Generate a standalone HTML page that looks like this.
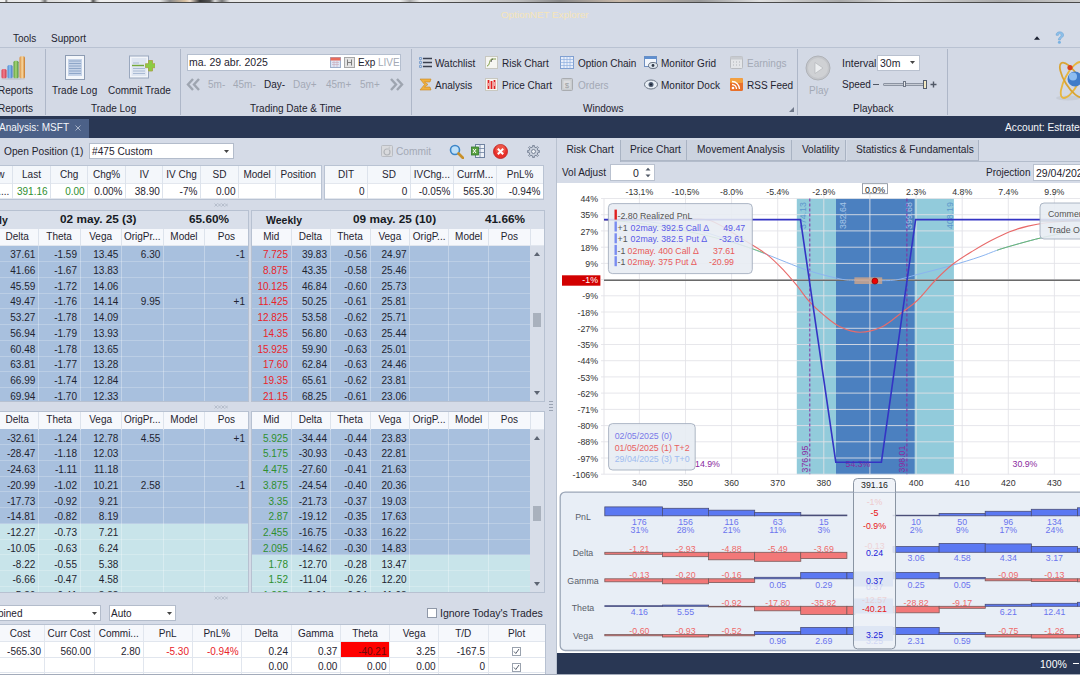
<!DOCTYPE html>
<html><head><meta charset="utf-8">
<style>
*{box-sizing:border-box;margin:0;padding:0}
html,body{width:1080px;height:675px;overflow:hidden;background:#d5dbe7;font-family:"Liberation Sans",sans-serif;font-size:10px;color:#1f2430}
.a{position:absolute}
.t{position:absolute;white-space:nowrap;line-height:1}
#topstrip{left:0;top:0;width:1080px;height:2px}
#topline{left:0;top:2px;width:1080px;height:1px;background:#4a4a4a}
.sep{position:absolute;width:1px;background:#aeb7c8}
.dis{color:#a3a9b5}
.grid{position:absolute;border-collapse:collapse;table-layout:fixed}
.c{position:absolute;white-space:nowrap;overflow:hidden}
</style></head><body>
<div id="topstrip" class="a" style="background:linear-gradient(90deg,#f0f0f0 0,#f0f0f0 5px,#6a6a6a 6px,#e8e8e8 8px,#eee 40px,#777 45px,#ddd 48px,#f2f2f2 90px,#555 93px,#ccc 97px,#f0f0f0 100px,#e6e6e6 160px,#8a8a8a 170px,#d8c0a0 185px,#f0e0d0 190px,#333 200px,#555 210px,#ddd 215px,#777 222px,#e8e8e8 230px,#eee 400px,#aaa 410px,#ececec 420px,#bbb 520px,#888 560px,#c9b9a9 620px,#999 700px,#e0e0e0 760px,#aaa 840px,#ddd 900px,#aaa 1000px,#ccc 1080px)"></div>
<div id="topline" class="a"></div>
<div class="t" style="left:501px;top:10px;color:#f6e5b8;font-size:9.8px">OptionNET Explorer</div>
<!-- menu -->
<div class="t" style="left:13px;top:34px">Tools</div>
<div class="t" style="left:51px;top:34px">Support</div>
<svg class="a" style="left:1034px;top:35.5px" width="6" height="4"><path d="M0 3.8L3 0.3L6 3.8Z" fill="#1a2030"/></svg>
<svg class="a" style="left:1054px;top:31px" width="11" height="14"><path d="M2 4.2C2 1.8 4 0.8 5.8 0.8C8 0.8 9.6 2.2 9.6 4C9.6 5.8 8.2 6.4 7.2 7.2C6.6 7.7 6.4 8.2 6.4 9H4.4C4.4 7.6 4.8 6.8 5.8 6C6.6 5.4 7.2 5 7.2 4.1C7.2 3.3 6.6 2.8 5.8 2.8C4.9 2.8 4.3 3.4 4.3 4.4Z" fill="#8cc0ea" stroke="#6a9fd0" stroke-width="0.5"/><circle cx="5.4" cy="11.3" r="1.5" fill="#7ab2e2"/></svg>
<!-- ribbon -->
<div class="a" style="left:0;top:47px;width:1080px;height:1px;background:#b9c2d2"></div>
<div class="a" style="left:0;top:48px;width:1080px;height:68px;background:#d3d9e5"></div>
<div class="sep" style="left:45px;top:49px;height:66px"></div>
<div class="sep" style="left:180px;top:49px;height:66px"></div>
<div class="sep" style="left:411px;top:49px;height:66px"></div>
<div class="sep" style="left:797px;top:49px;height:66px"></div>
<div class="sep" style="left:947px;top:49px;height:66px"></div>
<!-- reports group -->
<svg class="a" style="left:0;top:55px" width="27" height="25">
 <defs><linearGradient id="gr1" x1="0" x2="1"><stop offset="0" stop-color="#d84050"/><stop offset="0.5" stop-color="#f08090"/><stop offset="1" stop-color="#c83040"/></linearGradient>
 <linearGradient id="gr2" x1="0" x2="1"><stop offset="0" stop-color="#4a88d0"/><stop offset="0.5" stop-color="#90c0f0"/><stop offset="1" stop-color="#3a70b8"/></linearGradient>
 <linearGradient id="gr3" x1="0" x2="1"><stop offset="0" stop-color="#5a9a38"/><stop offset="0.5" stop-color="#a8d878"/><stop offset="1" stop-color="#4a8a30"/></linearGradient>
 <linearGradient id="gr4" x1="0" x2="1"><stop offset="0" stop-color="#d88a38"/><stop offset="0.5" stop-color="#f8d8a0"/><stop offset="1" stop-color="#c87828"/></linearGradient></defs>
 <rect x="1.5" y="14" width="5" height="9.5" rx="1.5" fill="url(#gr1)"/>
 <rect x="7.5" y="10" width="5" height="13.5" rx="1.5" fill="url(#gr2)"/>
 <rect x="13.5" y="5.8" width="5" height="17.7" rx="1.5" fill="url(#gr3)"/>
 <rect x="19.5" y="1.3" width="5.5" height="22.2" rx="1.5" fill="url(#gr4)"/>
 <ellipse cx="13" cy="24" rx="12" ry="1.2" fill="#b9c0cc" opacity="0.6"/>
</svg>
<div class="t" style="left:-2px;top:86px">Reports</div>
<div class="t" style="left:-2px;top:104px">Reports</div>
<!-- trade log group -->
<svg class="a" style="left:64px;top:55px" width="22" height="26">
 <rect x="1.5" y="0.5" width="19" height="24" fill="#f4f7fb" stroke="#8d9cb3"/>
 <rect x="4" y="4" width="14" height="17" fill="#c5d3e8"/>
 <path d="M5 6h12M5 8.5h12M5 11h12M5 13.5h12M5 16h12M5 18.5h12" stroke="#8ea6c8" stroke-width="1"/>
</svg>
<div class="t" style="left:52px;top:86px">Trade Log</div>
<svg class="a" style="left:128px;top:55px" width="27" height="25">
 <rect x="1.5" y="1" width="19" height="22" fill="#f2f5fa" stroke="#9aa8be"/>
 <rect x="3.5" y="3" width="15" height="18" fill="#dfe6f1"/>
 <path d="M5 13.5h12M5 16h12M5 18.5h12M5 8h6" stroke="#a9bad4" stroke-width="1.2"/>
 <path d="M4 10.5h12" stroke="#74a83a" stroke-width="1.4"/>
 <path d="M20.5 5.5h4v3.2h2.8v4h-2.8v3.3h-4v-3.3h-3v-4h3z" fill="#8ccc44" stroke="#a8a040" stroke-width="0.8"/>
</svg>
<div class="t" style="left:108px;top:86px">Commit Trade</div>
<div class="t" style="left:91px;top:104px">Trade Log</div>
<!-- trading date group -->
<div class="a" style="left:187px;top:54px;width:214px;height:17px;background:#fff;border:1px solid #b5bfcf"></div>
<div class="t" style="left:189px;top:57px;font-size:10.5px">ma. 29 abr. 2025</div>
<svg class="a" style="left:330px;top:57px" width="11" height="11">
 <rect x="0.5" y="0.5" width="10" height="10" fill="#dde6f5" stroke="#9fb0cc"/>
 <rect x="0.5" y="0.5" width="10" height="3" fill="#e86a5a"/>
 <path d="M2 5.5h7M2 7.5h7M4 4v6M7 4v6" stroke="#c9a9b9" stroke-width="0.6"/>
</svg>
<svg class="a" style="left:344px;top:57px" width="11" height="11">
 <rect x="0.5" y="0.5" width="10" height="10" fill="#e4e4e4" stroke="#a7a7a7"/>
 <path d="M3.5 2.5v6M7.5 2.5v6M3.5 5.5h4" stroke="#7d7d7d" stroke-width="1"/>
</svg>
<div class="t" style="left:358px;top:58px">Exp</div>
<div class="t dis" style="left:378px;top:58px">LIVE</div>
<svg class="a" style="left:186px;top:78px" width="15" height="13"><path d="M7 1L2 6.5L7 12M13 1L8 6.5L13 12" fill="none" stroke="#9ea5b0" stroke-width="2.4"/></svg>
<div class="t dis" style="left:208px;top:80px">5m-</div>
<div class="t dis" style="left:233px;top:80px">45m-</div>
<div class="t" style="left:264px;top:80px">Day-</div>
<div class="t dis" style="left:293px;top:80px">Day+</div>
<div class="t dis" style="left:326px;top:80px">45m+</div>
<div class="t dis" style="left:360px;top:80px">5m+</div>
<svg class="a" style="left:389px;top:78px" width="15" height="13"><path d="M2 1L7 6.5L2 12M8 1L13 6.5L8 12" fill="none" stroke="#9ea5b0" stroke-width="2.4"/></svg>
<div class="t" style="left:250px;top:104px">Trading Date &amp; Time</div>
<!-- windows group -->
<svg class="a" style="left:419px;top:57px" width="13" height="11">
 <circle cx="1.5" cy="1.5" r="1.2" fill="none" stroke="#4a7fc0" stroke-width="0.8"/><circle cx="1.5" cy="5.5" r="1.2" fill="none" stroke="#4a7fc0" stroke-width="0.8"/><circle cx="1.5" cy="9.5" r="1.2" fill="none" stroke="#4a7fc0" stroke-width="0.8"/>
 <path d="M4 1.5h9M4 5.5h9M4 9.5h9" stroke="#3b4150" stroke-width="1.3"/>
</svg>
<div class="t" style="left:435px;top:59px">Watchlist</div>
<svg class="a" style="left:419px;top:78px" width="13" height="13"><path d="M1 1h11l-1 3H5.5L9 6.5 5.5 9H11l1 3H1l4.5-5.5z" fill="#f0b040" stroke="#c98820" stroke-width="0.6"/></svg>
<div class="t" style="left:435px;top:81px">Analysis</div>
<svg class="a" style="left:485px;top:56px" width="13" height="13"><rect x="0.5" y="0.5" width="12" height="12" fill="#f6f6f2" stroke="#c8c8c0"/><path d="M2 10C5 10 4 3 7 3S9 3 11 3" fill="none" stroke="#7a9a40" stroke-width="1"/><path d="M6 6C6.5 4 7 3 8 3" stroke="#303030" stroke-width="0.8" fill="none"/></svg>
<div class="t" style="left:502px;top:59px">Risk Chart</div>
<svg class="a" style="left:485px;top:78px" width="13" height="13"><rect x="0.5" y="0.5" width="12" height="12" fill="#f6f6f2" stroke="#c8c8c0"/><path d="M3.5 2v9M6.5 3v8M9.5 2v9" stroke="#e02020" stroke-width="1.8"/><path d="M3.5 5v3M9.5 4v4" stroke="#fff" stroke-width="0.6"/></svg>
<div class="t" style="left:502px;top:81px">Price Chart</div>
<svg class="a" style="left:560px;top:56px" width="14" height="13"><rect x="0.5" y="0.5" width="13" height="12" fill="#e8eefa" stroke="#7f9fd0"/><path d="M0.5 3.5h13M0.5 6.5h13M0.5 9.5h13M4 0.5v12M7 0.5v12M10 0.5v12" stroke="#8fb0e0" stroke-width="0.7"/></svg>
<div class="t" style="left:578px;top:59px">Option Chain</div>
<svg class="a" style="left:561px;top:78px" width="12" height="13"><rect x="0.5" y="0.5" width="11" height="12" rx="1" fill="#c9ccd0" stroke="#a9acb0"/><rect x="2.5" y="2.5" width="7" height="8" fill="#dcdde0"/><text x="6" y="10" text-anchor="middle" font-size="8" fill="#9a9da0" font-family="Liberation Sans">$</text></svg>
<div class="t dis" style="left:578px;top:81px">Orders</div>
<svg class="a" style="left:644px;top:56px" width="14" height="13"><rect x="0.5" y="0.5" width="12" height="10" fill="#f2f6fc" stroke="#6f8fbf"/><rect x="0.5" y="0.5" width="12" height="2.5" fill="#5f8fd0"/><ellipse cx="9" cy="9.5" rx="4.5" ry="3" fill="#e0e8f0" stroke="#4a5566" stroke-width="0.8"/><circle cx="9" cy="9.5" r="1.4" fill="#303a48"/></svg>
<div class="t" style="left:661px;top:59px">Monitor Grid</div>
<svg class="a" style="left:644px;top:79px" width="14" height="11"><ellipse cx="7" cy="5.5" rx="6.5" ry="4.5" fill="#e8eef5" stroke="#5a6676" stroke-width="0.9"/><circle cx="7" cy="5.5" r="2.5" fill="#4b5a70"/><circle cx="7" cy="5.5" r="1" fill="#1a2230"/></svg>
<div class="t" style="left:661px;top:81px">Monitor Dock</div>
<svg class="a" style="left:730px;top:56px" width="13" height="13"><rect x="0.5" y="0.5" width="12" height="12" rx="1" fill="#e3e5e8" stroke="#b8bbc0"/><rect x="0.5" y="0.5" width="12" height="3" fill="#c8cbd0"/><path d="M3 6h1M6 6h1M9 6h1M3 9h1M6 9h1M9 9h1" stroke="#b0b3b8"/></svg>
<div class="t dis" style="left:747px;top:59px">Earnings</div>
<svg class="a" style="left:730px;top:78px" width="13" height="13"><rect x="0" y="0" width="13" height="13" rx="1.5" fill="#e8702a"/><rect x="0" y="0" width="13" height="5" rx="1.5" fill="#f3a040"/><circle cx="3" cy="10" r="1.3" fill="#fff"/><path d="M2 6.5a4.5 4.5 0 0 1 4.5 4.5M2 3.5a7.5 7.5 0 0 1 7.5 7.5" fill="none" stroke="#fff" stroke-width="1.3"/></svg>
<div class="t" style="left:747px;top:81px">RSS Feed</div>
<div class="t" style="left:583px;top:104px">Windows</div>
<svg class="a" style="left:789px;top:107px" width="5" height="5"><path d="M5 0V5H0Z" fill="#6f7889"/></svg>
<!-- playback group -->
<svg class="a" style="left:805px;top:55px" width="26" height="26"><circle cx="13" cy="13" r="12" fill="#c4c6ca" stroke="#b0b3b8"/><circle cx="13" cy="13" r="10" fill="#cfd1d4"/><path d="M10 7.5L18 13L10 18.5Z" fill="#eceef0" stroke="#aeb1b5" stroke-width="0.6"/></svg>
<div class="t dis" style="left:809px;top:86px">Play</div>
<div class="t" style="left:842px;top:58px;font-size:10.5px">Interval</div>
<div class="a" style="left:877px;top:55px;width:43px;height:16px;background:#fff;border:1px solid #b9c1cf"></div>
<div class="t" style="left:880px;top:58px;font-size:10.5px">30m</div>
<svg class="a" style="left:910px;top:61px" width="5" height="3"><path d="M0 0H5L2.5 3Z" fill="#444"/></svg>
<div class="t" style="left:842px;top:80px;font-size:10px">Speed</div>
<div class="a" style="left:873px;top:84px;width:6px;height:1px;background:#505866"></div>
<div class="a" style="left:883px;top:83px;width:41px;height:3px;background:#c5cad3;border:1px solid #8c94a2;border-radius:1px"></div>
<div class="a" style="left:903px;top:81px;width:3px;height:6px;background:#e6e8ec;border:1px solid #6f7785"></div>
<div class="a" style="left:923px;top:80px;width:4px;height:9px;background:#f2e8c0;border:1px solid #555d6b"></div>
<svg class="a" style="left:930px;top:81px" width="7" height="7"><path d="M3.5 0.5v6M0.5 3.5h6" stroke="#505866" stroke-width="1.4"/></svg>
<div class="t" style="left:853px;top:104px">Playback</div>
<!-- atom logo -->
<svg class="a" style="left:1050px;top:56px" width="30" height="48">
 <ellipse cx="18" cy="42" rx="12" ry="2.5" fill="#c4c9d3" opacity="0.8"/>
 <ellipse cx="22" cy="24" rx="7" ry="20" transform="rotate(28 22 24)" fill="none" stroke="#e6b640" stroke-width="1.8"/>
 <ellipse cx="22" cy="24" rx="7" ry="20" transform="rotate(-32 22 24)" fill="none" stroke="#d9a534" stroke-width="1.8"/>
 <circle cx="25" cy="23" r="7.5" fill="#3f7cc9"/>
 <circle cx="23" cy="20.5" r="4" fill="#8dbdf0"/>
 <circle cx="20" cy="11.5" r="2.6" fill="#d8401c"/>
</svg>
<!-- dark strip -->
<div class="a" style="left:0;top:116px;width:1080px;height:22px;background:#293754"></div>
<div class="a" style="left:0;top:119px;width:89px;height:19px;background:#4c6188"></div>
<div class="t" style="left:-1px;top:123px;color:#f4f6fa;font-size:10px">Analysis: MSFT</div>
<svg class="a" style="left:75px;top:125px" width="6" height="6"><path d="M0.5 0.5L5.5 5.5M5.5 0.5L0.5 5.5" stroke="#a9b4c8" stroke-width="1"/></svg>
<div class="t" style="left:1005px;top:123px;color:#f4f6fa;font-size:10.2px">Account: Estrategia</div>
<div class="a" style="left:0;top:138px;width:556px;height:537px;background:#d5dbe7"></div>
<div class="a" style="left:556px;top:138px;width:1px;height:537px;background:#b9c2d0"></div>
<div class="t" style="left:4px;top:147px;font-size:10.2px">Open Position (1)</div>
<div class="a" style="left:89px;top:143px;width:145px;height:16px;background:#fff;border:1px solid #b3bccb"></div>
<div class="t" style="left:92px;top:147px;font-size:10.2px">#475 Custom</div>
<svg class="a" style="left:224px;top:150px" width="5" height="3"><path d="M0 0H5L2.5 3Z" fill="#444"/></svg>
<svg class="a" style="left:381px;top:145px" width="12" height="12"><rect x="0.5" y="0.5" width="11" height="11" rx="1" fill="#d9dadd" stroke="#b9bcc2"/><circle cx="6" cy="7" r="3" fill="none" stroke="#b0b3b8" stroke-width="1.2"/><path d="M9 1v4h-4" fill="#c7c9cd"/></svg>
<div class="t dis" style="left:396px;top:147px;font-size:10.2px">Commit</div>
<svg class="a" style="left:449px;top:144px" width="15" height="15"><circle cx="6" cy="6" r="4.5" fill="#bfe0f8" stroke="#3d86c8" stroke-width="1.6"/><path d="M9.5 9.5L14 14" stroke="#c8902a" stroke-width="2.6" stroke-linecap="round"/></svg>
<svg class="a" style="left:471px;top:144px" width="14" height="14"><rect x="4.5" y="0.5" width="9" height="13" fill="#eef2f8" stroke="#6f82a0"/><path d="M4.5 4.5h9M4.5 8.5h9M9 0.5v13" stroke="#6f82a0" stroke-width="0.8"/><rect x="0.5" y="3" width="7" height="8" fill="#5aa040" stroke="#2f7a2a" stroke-width="0.8"/><path d="M2 5l3 4M5 5l-3 4" stroke="#fff" stroke-width="1"/></svg>
<svg class="a" style="left:493px;top:144px" width="15" height="15"><circle cx="7.5" cy="7.5" r="7" fill="#e8302a" stroke="#b82020" stroke-width="0.8"/><circle cx="7.5" cy="5.5" r="5" fill="#f06a5a" opacity="0.6"/><path d="M4.8 4.8l5.4 5.4M10.2 4.8l-5.4 5.4" stroke="#fff" stroke-width="2"/></svg>
<svg class="a" style="left:527px;top:145px" width="13" height="13"><path d="M11.03 5.69 L12.76 5.76 L12.76 7.24 L11.03 7.31 L10.27 9.13 L11.45 10.40 L10.40 11.45 L9.13 10.27 L7.31 11.03 L7.24 12.76 L5.76 12.76 L5.69 11.03 L3.87 10.27 L2.60 11.45 L1.55 10.40 L2.73 9.13 L1.97 7.31 L0.24 7.24 L0.24 5.76 L1.97 5.69 L2.73 3.87 L1.55 2.60 L2.60 1.55 L3.87 2.73 L5.69 1.97 L5.76 0.24 L7.24 0.24 L7.31 1.97 L9.13 2.73 L10.40 1.55 L11.45 2.60 L10.27 3.87Z" fill="#c9d0dc" stroke="#6f7b8e" stroke-width="0.9"/><circle cx="6.5" cy="6.5" r="2" fill="#eef1f5" stroke="#6f7b8e" stroke-width="0.9"/></svg>
<div class="a" style="left:-25.0px;top:166.0px;width:346.0px;height:32.5px;background:#fff;overflow:hidden">
<div class="a" style="left:0;top:0;width:346.0px;height:17.7px;background:#f4f7fb"></div>
<div class="c" style="left:0.0px;top:0.0px;width:37.4px;height:17.7px;line-height:17.7px;text-align:center;font-size:10px;">View</div>
<div class="c" style="left:37.4px;top:0.0px;width:38.2px;height:17.7px;line-height:17.7px;text-align:center;font-size:10px;">Last</div>
<div class="c" style="left:75.6px;top:0.0px;width:37.0px;height:17.7px;line-height:17.7px;text-align:center;font-size:10px;">Chg</div>
<div class="c" style="left:112.6px;top:0.0px;width:37.9px;height:17.7px;line-height:17.7px;text-align:center;font-size:10px;">Chg%</div>
<div class="c" style="left:150.5px;top:0.0px;width:37.3px;height:17.7px;line-height:17.7px;text-align:center;font-size:10px;">IV</div>
<div class="c" style="left:187.8px;top:0.0px;width:37.6px;height:17.7px;line-height:17.7px;text-align:center;font-size:10px;">IV Chg</div>
<div class="c" style="left:225.4px;top:0.0px;width:38.1px;height:17.7px;line-height:17.7px;text-align:center;font-size:10px;">SD</div>
<div class="c" style="left:263.5px;top:0.0px;width:37.1px;height:17.7px;line-height:17.7px;text-align:center;font-size:10px;">Model</div>
<div class="c" style="left:300.6px;top:0.0px;width:45.4px;height:17.7px;line-height:17.7px;text-align:center;font-size:10px;">Position</div>
<div class="a" style="left:0;top:16.7px;width:346.0px;height:1px;background:#e3e7ee"></div>
<div class="c" style="left:0.0px;top:19.2px;width:37.4px;height:14.8px;line-height:14.8px;text-align:right;padding-right:3px;font-size:10px;">....</div>
<div class="c" style="left:37.4px;top:19.2px;width:38.2px;height:14.8px;line-height:14.8px;text-align:right;padding-right:3px;color:#2f8f2f;font-size:10px;">391.16</div>
<div class="c" style="left:75.6px;top:19.2px;width:37.0px;height:14.8px;line-height:14.8px;text-align:right;padding-right:3px;color:#2f8f2f;font-size:10px;">0.00</div>
<div class="c" style="left:112.6px;top:19.2px;width:37.9px;height:14.8px;line-height:14.8px;text-align:right;padding-right:3px;font-size:10px;">0.00%</div>
<div class="c" style="left:150.5px;top:19.2px;width:37.3px;height:14.8px;line-height:14.8px;text-align:right;padding-right:3px;font-size:10px;">38.90</div>
<div class="c" style="left:187.8px;top:19.2px;width:37.6px;height:14.8px;line-height:14.8px;text-align:right;padding-right:3px;font-size:10px;">-7%</div>
<div class="c" style="left:225.4px;top:19.2px;width:38.1px;height:14.8px;line-height:14.8px;text-align:right;padding-right:3px;font-size:10px;">0.00</div>
<div class="c" style="left:263.5px;top:19.2px;width:37.1px;height:14.8px;line-height:14.8px;text-align:right;padding-right:3px;font-size:10px;"></div>
<div class="c" style="left:300.6px;top:19.2px;width:45.4px;height:14.8px;line-height:14.8px;text-align:right;padding-right:3px;font-size:10px;"></div>
<div class="a" style="left:0;top:31.5px;width:346.0px;height:1px;background:#e3e7ee"></div>
<div class="a" style="left:36.9px;top:0;width:1px;height:32.5px;background:#dde3ec"></div>
<div class="a" style="left:75.1px;top:0;width:1px;height:32.5px;background:#dde3ec"></div>
<div class="a" style="left:112.1px;top:0;width:1px;height:32.5px;background:#dde3ec"></div>
<div class="a" style="left:150.0px;top:0;width:1px;height:32.5px;background:#dde3ec"></div>
<div class="a" style="left:187.3px;top:0;width:1px;height:32.5px;background:#dde3ec"></div>
<div class="a" style="left:224.9px;top:0;width:1px;height:32.5px;background:#dde3ec"></div>
<div class="a" style="left:263.0px;top:0;width:1px;height:32.5px;background:#dde3ec"></div>
<div class="a" style="left:300.1px;top:0;width:1px;height:32.5px;background:#dde3ec"></div>
</div>
<div class="a" style="left:-26.0px;top:165.0px;width:348.0px;height:34.5px;border:1px solid #b9c3d3"></div>
<div class="a" style="left:324.5px;top:166.0px;width:218.9px;height:32.5px;background:#fff;overflow:hidden">
<div class="a" style="left:0;top:0;width:218.9px;height:17.7px;background:#f4f7fb"></div>
<div class="c" style="left:0.0px;top:0.0px;width:43.0px;height:17.7px;line-height:17.7px;text-align:center;font-size:10px;">DIT</div>
<div class="c" style="left:43.0px;top:0.0px;width:42.9px;height:17.7px;line-height:17.7px;text-align:center;font-size:10px;">SD</div>
<div class="c" style="left:85.9px;top:0.0px;width:43.0px;height:17.7px;line-height:17.7px;text-align:center;font-size:10px;">IVChg...</div>
<div class="c" style="left:128.9px;top:0.0px;width:43.5px;height:17.7px;line-height:17.7px;text-align:center;font-size:10px;">CurrM...</div>
<div class="c" style="left:172.4px;top:0.0px;width:46.5px;height:17.7px;line-height:17.7px;text-align:center;font-size:10px;">PnL%</div>
<div class="a" style="left:0;top:16.7px;width:218.9px;height:1px;background:#e3e7ee"></div>
<div class="c" style="left:0.0px;top:19.2px;width:43.0px;height:14.8px;line-height:14.8px;text-align:right;padding-right:3px;font-size:10px;">0</div>
<div class="c" style="left:43.0px;top:19.2px;width:42.9px;height:14.8px;line-height:14.8px;text-align:right;padding-right:3px;font-size:10px;">0</div>
<div class="c" style="left:85.9px;top:19.2px;width:43.0px;height:14.8px;line-height:14.8px;text-align:right;padding-right:3px;font-size:10px;">-0.05%</div>
<div class="c" style="left:128.9px;top:19.2px;width:43.5px;height:14.8px;line-height:14.8px;text-align:right;padding-right:3px;font-size:10px;">565.30</div>
<div class="c" style="left:172.4px;top:19.2px;width:46.5px;height:14.8px;line-height:14.8px;text-align:right;padding-right:3px;font-size:10px;">-0.94%</div>
<div class="a" style="left:0;top:31.5px;width:218.9px;height:1px;background:#e3e7ee"></div>
<div class="a" style="left:42.5px;top:0;width:1px;height:32.5px;background:#dde3ec"></div>
<div class="a" style="left:85.4px;top:0;width:1px;height:32.5px;background:#dde3ec"></div>
<div class="a" style="left:128.4px;top:0;width:1px;height:32.5px;background:#dde3ec"></div>
<div class="a" style="left:171.9px;top:0;width:1px;height:32.5px;background:#dde3ec"></div>
</div>
<div class="a" style="left:323.5px;top:165.0px;width:220.9px;height:34.5px;border:1px solid #b9c3d3"></div>
<div class="a" style="left:549px;top:401px;width:4px;height:12px;background:repeating-linear-gradient(180deg,#9aa3b2 0 1px,transparent 1px 3px)"></div>
<svg class="a" style="left:214px;top:203px" width="14" height="4"><path d="M0.5 0.5L3.5 3.5M3.5 0.5L0.5 3.5M4 0.5L7 3.5M7 0.5L4 3.5M7.5 0.5L10.5 3.5M10.5 0.5L7.5 3.5M11 0.5L14 3.5M14 0.5L11 3.5" stroke="#a9b2c0" stroke-width="0.7"/></svg>
<svg class="a" style="left:214px;top:405px" width="14" height="4"><path d="M0.5 0.5L3.5 3.5M3.5 0.5L0.5 3.5M4 0.5L7 3.5M7 0.5L4 3.5M7.5 0.5L10.5 3.5M10.5 0.5L7.5 3.5M11 0.5L14 3.5M14 0.5L11 3.5" stroke="#a9b2c0" stroke-width="0.7"/></svg>
<svg class="a" style="left:214px;top:596px" width="14" height="4"><path d="M0.5 0.5L3.5 3.5M3.5 0.5L0.5 3.5M4 0.5L7 3.5M7 0.5L4 3.5M7.5 0.5L10.5 3.5M10.5 0.5L7.5 3.5M11 0.5L14 3.5M14 0.5L11 3.5" stroke="#a9b2c0" stroke-width="0.7"/></svg>
<div class="a" style="left:-5.0px;top:210.0px;width:254.0px;height:192.0px;border:1px solid #b7c1d1;background:#d9dfea"></div>
<div class="a" style="left:-4.0px;top:211.0px;width:252.0px;height:17.6px;background:#d9dfea"></div>
<div class="t" style="left:-1.0px;top:214.6px;font-weight:bold;font-size:10.5px;color:#161a22">ly</div>
<div class="t" style="left:60.0px;top:213.9px;font-weight:bold;font-size:11.8px;color:#161a22">02 may. 25 (3)</div>
<div class="t" style="left:189.0px;top:213.9px;font-weight:bold;font-size:11.8px;color:#161a22">65.60%</div>
<div class="a" style="left:-4.0px;top:228.6px;width:252.0px;height:172.4px;background:#fff;overflow:hidden">
<div class="a" style="left:0;top:0;width:252.0px;height:17.4px;background:#f6f8fc"></div>
<div class="c" style="left:0.0px;top:-0.8px;width:42.3px;height:17.4px;line-height:17.4px;text-align:center;">Delta</div>
<div class="c" style="left:42.3px;top:-0.8px;width:41.7px;height:17.4px;line-height:17.4px;text-align:center;">Theta</div>
<div class="c" style="left:84.0px;top:-0.8px;width:41.3px;height:17.4px;line-height:17.4px;text-align:center;">Vega</div>
<div class="c" style="left:125.3px;top:-0.8px;width:42.0px;height:17.4px;line-height:17.4px;text-align:center;">OrigPr...</div>
<div class="c" style="left:167.3px;top:-0.8px;width:41.4px;height:17.4px;line-height:17.4px;text-align:center;">Model</div>
<div class="c" style="left:208.7px;top:-0.8px;width:43.3px;height:17.4px;line-height:17.4px;text-align:center;">Pos</div>
<div class="a" style="left:0;top:16.4px;width:252.0px;height:1px;background:#e1e6ee"></div>
<div class="a" style="left:0;top:17px;width:252.0px;height:16px;background:#a8c0de"></div>
<div class="c" style="left:0.0px;top:18.6px;width:42.3px;height:15.7px;line-height:15.7px;text-align:right;padding-right:3px;">37.61</div>
<div class="c" style="left:42.3px;top:18.6px;width:41.7px;height:15.7px;line-height:15.7px;text-align:right;padding-right:3px;">-1.59</div>
<div class="c" style="left:84.0px;top:18.6px;width:41.3px;height:15.7px;line-height:15.7px;text-align:right;padding-right:3px;">13.45</div>
<div class="c" style="left:125.3px;top:18.6px;width:42.0px;height:15.7px;line-height:15.7px;text-align:right;padding-right:3px;">6.30</div>
<div class="c" style="left:167.3px;top:18.6px;width:41.4px;height:15.7px;line-height:15.7px;text-align:right;padding-right:3px;"></div>
<div class="c" style="left:208.7px;top:18.6px;width:43.3px;height:15.7px;line-height:15.7px;text-align:right;padding-right:3px;">-1</div>
<div class="a" style="left:0;top:32px;width:252.0px;height:1px;background:rgba(255,255,255,0.22)"></div>
<div class="a" style="left:0;top:33px;width:252.0px;height:16px;background:#a8c0de"></div>
<div class="c" style="left:0.0px;top:34.3px;width:42.3px;height:15.7px;line-height:15.7px;text-align:right;padding-right:3px;">41.66</div>
<div class="c" style="left:42.3px;top:34.3px;width:41.7px;height:15.7px;line-height:15.7px;text-align:right;padding-right:3px;">-1.67</div>
<div class="c" style="left:84.0px;top:34.3px;width:41.3px;height:15.7px;line-height:15.7px;text-align:right;padding-right:3px;">13.83</div>
<div class="c" style="left:125.3px;top:34.3px;width:42.0px;height:15.7px;line-height:15.7px;text-align:right;padding-right:3px;"></div>
<div class="c" style="left:167.3px;top:34.3px;width:41.4px;height:15.7px;line-height:15.7px;text-align:right;padding-right:3px;"></div>
<div class="c" style="left:208.7px;top:34.3px;width:43.3px;height:15.7px;line-height:15.7px;text-align:right;padding-right:3px;"></div>
<div class="a" style="left:0;top:48px;width:252.0px;height:1px;background:rgba(255,255,255,0.22)"></div>
<div class="a" style="left:0;top:49px;width:252.0px;height:16px;background:#a8c0de"></div>
<div class="c" style="left:0.0px;top:50.1px;width:42.3px;height:15.7px;line-height:15.7px;text-align:right;padding-right:3px;">45.59</div>
<div class="c" style="left:42.3px;top:50.1px;width:41.7px;height:15.7px;line-height:15.7px;text-align:right;padding-right:3px;">-1.72</div>
<div class="c" style="left:84.0px;top:50.1px;width:41.3px;height:15.7px;line-height:15.7px;text-align:right;padding-right:3px;">14.06</div>
<div class="c" style="left:125.3px;top:50.1px;width:42.0px;height:15.7px;line-height:15.7px;text-align:right;padding-right:3px;"></div>
<div class="c" style="left:167.3px;top:50.1px;width:41.4px;height:15.7px;line-height:15.7px;text-align:right;padding-right:3px;"></div>
<div class="c" style="left:208.7px;top:50.1px;width:43.3px;height:15.7px;line-height:15.7px;text-align:right;padding-right:3px;"></div>
<div class="a" style="left:0;top:64px;width:252.0px;height:1px;background:rgba(255,255,255,0.22)"></div>
<div class="a" style="left:0;top:65px;width:252.0px;height:15px;background:#a8c0de"></div>
<div class="c" style="left:0.0px;top:65.8px;width:42.3px;height:15.7px;line-height:15.7px;text-align:right;padding-right:3px;">49.47</div>
<div class="c" style="left:42.3px;top:65.8px;width:41.7px;height:15.7px;line-height:15.7px;text-align:right;padding-right:3px;">-1.76</div>
<div class="c" style="left:84.0px;top:65.8px;width:41.3px;height:15.7px;line-height:15.7px;text-align:right;padding-right:3px;">14.14</div>
<div class="c" style="left:125.3px;top:65.8px;width:42.0px;height:15.7px;line-height:15.7px;text-align:right;padding-right:3px;">9.95</div>
<div class="c" style="left:167.3px;top:65.8px;width:41.4px;height:15.7px;line-height:15.7px;text-align:right;padding-right:3px;"></div>
<div class="c" style="left:208.7px;top:65.8px;width:43.3px;height:15.7px;line-height:15.7px;text-align:right;padding-right:3px;">+1</div>
<div class="a" style="left:0;top:79px;width:252.0px;height:1px;background:rgba(255,255,255,0.22)"></div>
<div class="a" style="left:0;top:80px;width:252.0px;height:16px;background:#a8c0de"></div>
<div class="c" style="left:0.0px;top:81.5px;width:42.3px;height:15.7px;line-height:15.7px;text-align:right;padding-right:3px;">53.27</div>
<div class="c" style="left:42.3px;top:81.5px;width:41.7px;height:15.7px;line-height:15.7px;text-align:right;padding-right:3px;">-1.78</div>
<div class="c" style="left:84.0px;top:81.5px;width:41.3px;height:15.7px;line-height:15.7px;text-align:right;padding-right:3px;">14.09</div>
<div class="c" style="left:125.3px;top:81.5px;width:42.0px;height:15.7px;line-height:15.7px;text-align:right;padding-right:3px;"></div>
<div class="c" style="left:167.3px;top:81.5px;width:41.4px;height:15.7px;line-height:15.7px;text-align:right;padding-right:3px;"></div>
<div class="c" style="left:208.7px;top:81.5px;width:43.3px;height:15.7px;line-height:15.7px;text-align:right;padding-right:3px;"></div>
<div class="a" style="left:0;top:95px;width:252.0px;height:1px;background:rgba(255,255,255,0.22)"></div>
<div class="a" style="left:0;top:96px;width:252.0px;height:16px;background:#a8c0de"></div>
<div class="c" style="left:0.0px;top:97.3px;width:42.3px;height:15.7px;line-height:15.7px;text-align:right;padding-right:3px;">56.94</div>
<div class="c" style="left:42.3px;top:97.3px;width:41.7px;height:15.7px;line-height:15.7px;text-align:right;padding-right:3px;">-1.79</div>
<div class="c" style="left:84.0px;top:97.3px;width:41.3px;height:15.7px;line-height:15.7px;text-align:right;padding-right:3px;">13.93</div>
<div class="c" style="left:125.3px;top:97.3px;width:42.0px;height:15.7px;line-height:15.7px;text-align:right;padding-right:3px;"></div>
<div class="c" style="left:167.3px;top:97.3px;width:41.4px;height:15.7px;line-height:15.7px;text-align:right;padding-right:3px;"></div>
<div class="c" style="left:208.7px;top:97.3px;width:43.3px;height:15.7px;line-height:15.7px;text-align:right;padding-right:3px;"></div>
<div class="a" style="left:0;top:111px;width:252.0px;height:1px;background:rgba(255,255,255,0.22)"></div>
<div class="a" style="left:0;top:112px;width:252.0px;height:16px;background:#a8c0de"></div>
<div class="c" style="left:0.0px;top:113.0px;width:42.3px;height:15.7px;line-height:15.7px;text-align:right;padding-right:3px;">60.48</div>
<div class="c" style="left:42.3px;top:113.0px;width:41.7px;height:15.7px;line-height:15.7px;text-align:right;padding-right:3px;">-1.78</div>
<div class="c" style="left:84.0px;top:113.0px;width:41.3px;height:15.7px;line-height:15.7px;text-align:right;padding-right:3px;">13.65</div>
<div class="c" style="left:125.3px;top:113.0px;width:42.0px;height:15.7px;line-height:15.7px;text-align:right;padding-right:3px;"></div>
<div class="c" style="left:167.3px;top:113.0px;width:41.4px;height:15.7px;line-height:15.7px;text-align:right;padding-right:3px;"></div>
<div class="c" style="left:208.7px;top:113.0px;width:43.3px;height:15.7px;line-height:15.7px;text-align:right;padding-right:3px;"></div>
<div class="a" style="left:0;top:127px;width:252.0px;height:1px;background:rgba(255,255,255,0.22)"></div>
<div class="a" style="left:0;top:128px;width:252.0px;height:15px;background:#a8c0de"></div>
<div class="c" style="left:0.0px;top:128.7px;width:42.3px;height:15.7px;line-height:15.7px;text-align:right;padding-right:3px;">63.81</div>
<div class="c" style="left:42.3px;top:128.7px;width:41.7px;height:15.7px;line-height:15.7px;text-align:right;padding-right:3px;">-1.77</div>
<div class="c" style="left:84.0px;top:128.7px;width:41.3px;height:15.7px;line-height:15.7px;text-align:right;padding-right:3px;">13.28</div>
<div class="c" style="left:125.3px;top:128.7px;width:42.0px;height:15.7px;line-height:15.7px;text-align:right;padding-right:3px;"></div>
<div class="c" style="left:167.3px;top:128.7px;width:41.4px;height:15.7px;line-height:15.7px;text-align:right;padding-right:3px;"></div>
<div class="c" style="left:208.7px;top:128.7px;width:43.3px;height:15.7px;line-height:15.7px;text-align:right;padding-right:3px;"></div>
<div class="a" style="left:0;top:142px;width:252.0px;height:1px;background:rgba(255,255,255,0.22)"></div>
<div class="a" style="left:0;top:143px;width:252.0px;height:16px;background:#a8c0de"></div>
<div class="c" style="left:0.0px;top:144.4px;width:42.3px;height:15.7px;line-height:15.7px;text-align:right;padding-right:3px;">66.99</div>
<div class="c" style="left:42.3px;top:144.4px;width:41.7px;height:15.7px;line-height:15.7px;text-align:right;padding-right:3px;">-1.74</div>
<div class="c" style="left:84.0px;top:144.4px;width:41.3px;height:15.7px;line-height:15.7px;text-align:right;padding-right:3px;">12.84</div>
<div class="c" style="left:125.3px;top:144.4px;width:42.0px;height:15.7px;line-height:15.7px;text-align:right;padding-right:3px;"></div>
<div class="c" style="left:167.3px;top:144.4px;width:41.4px;height:15.7px;line-height:15.7px;text-align:right;padding-right:3px;"></div>
<div class="c" style="left:208.7px;top:144.4px;width:43.3px;height:15.7px;line-height:15.7px;text-align:right;padding-right:3px;"></div>
<div class="a" style="left:0;top:158px;width:252.0px;height:1px;background:rgba(255,255,255,0.22)"></div>
<div class="a" style="left:0;top:159px;width:252.0px;height:16px;background:#a8c0de"></div>
<div class="c" style="left:0.0px;top:160.2px;width:42.3px;height:15.7px;line-height:15.7px;text-align:right;padding-right:3px;">69.94</div>
<div class="c" style="left:42.3px;top:160.2px;width:41.7px;height:15.7px;line-height:15.7px;text-align:right;padding-right:3px;">-1.70</div>
<div class="c" style="left:84.0px;top:160.2px;width:41.3px;height:15.7px;line-height:15.7px;text-align:right;padding-right:3px;">12.33</div>
<div class="c" style="left:125.3px;top:160.2px;width:42.0px;height:15.7px;line-height:15.7px;text-align:right;padding-right:3px;"></div>
<div class="c" style="left:167.3px;top:160.2px;width:41.4px;height:15.7px;line-height:15.7px;text-align:right;padding-right:3px;"></div>
<div class="c" style="left:208.7px;top:160.2px;width:43.3px;height:15.7px;line-height:15.7px;text-align:right;padding-right:3px;"></div>
<div class="a" style="left:0;top:174px;width:252.0px;height:1px;background:rgba(255,255,255,0.22)"></div>
<div class="a" style="left:41.8px;top:0;width:1px;height:172.4px;background:rgba(255,255,255,0.3)"></div>
<div class="a" style="left:41.8px;top:0;width:1px;height:17.4px;background:#dde3ec"></div>
<div class="a" style="left:83.5px;top:0;width:1px;height:172.4px;background:rgba(255,255,255,0.3)"></div>
<div class="a" style="left:83.5px;top:0;width:1px;height:17.4px;background:#dde3ec"></div>
<div class="a" style="left:124.8px;top:0;width:1px;height:172.4px;background:rgba(255,255,255,0.3)"></div>
<div class="a" style="left:124.8px;top:0;width:1px;height:17.4px;background:#dde3ec"></div>
<div class="a" style="left:166.8px;top:0;width:1px;height:172.4px;background:rgba(255,255,255,0.3)"></div>
<div class="a" style="left:166.8px;top:0;width:1px;height:17.4px;background:#dde3ec"></div>
<div class="a" style="left:208.2px;top:0;width:1px;height:172.4px;background:rgba(255,255,255,0.3)"></div>
<div class="a" style="left:208.2px;top:0;width:1px;height:17.4px;background:#dde3ec"></div>
<div class="a" style="left:251.5px;top:0;width:1px;height:172.4px;background:rgba(255,255,255,0.3)"></div>
<div class="a" style="left:251.5px;top:0;width:1px;height:17.4px;background:#dde3ec"></div>
</div>
<div class="a" style="left:250.5px;top:210.0px;width:294.8px;height:192.0px;border:1px solid #b7c1d1;background:#d9dfea"></div>
<div class="a" style="left:251.5px;top:211.0px;width:292.8px;height:17.6px;background:#d9dfea"></div>
<div class="t" style="left:266.0px;top:214.6px;font-weight:bold;font-size:10.5px;color:#161a22">Weekly</div>
<div class="t" style="left:353.0px;top:213.9px;font-weight:bold;font-size:11.8px;color:#161a22">09 may. 25 (10)</div>
<div class="t" style="left:485.0px;top:213.9px;font-weight:bold;font-size:11.8px;color:#161a22">41.66%</div>
<div class="a" style="left:251.5px;top:228.6px;width:292.8px;height:172.4px;background:#fff;overflow:hidden">
<div class="a" style="left:0;top:0;width:292.8px;height:17.4px;background:#f6f8fc"></div>
<div class="c" style="left:0.0px;top:-0.8px;width:39.5px;height:17.4px;line-height:17.4px;text-align:center;">Mid</div>
<div class="c" style="left:39.5px;top:-0.8px;width:39.0px;height:17.4px;line-height:17.4px;text-align:center;">Delta</div>
<div class="c" style="left:78.5px;top:-0.8px;width:40.0px;height:17.4px;line-height:17.4px;text-align:center;">Theta</div>
<div class="c" style="left:118.5px;top:-0.8px;width:39.6px;height:17.4px;line-height:17.4px;text-align:center;">Vega</div>
<div class="c" style="left:158.1px;top:-0.8px;width:39.1px;height:17.4px;line-height:17.4px;text-align:center;">OrigP...</div>
<div class="c" style="left:197.2px;top:-0.8px;width:40.0px;height:17.4px;line-height:17.4px;text-align:center;">Model</div>
<div class="c" style="left:237.2px;top:-0.8px;width:41.3px;height:17.4px;line-height:17.4px;text-align:center;">Pos</div>
<div class="c" style="left:278.5px;top:-0.8px;width:14.3px;height:17.4px;line-height:17.4px;text-align:center;"></div>
<div class="a" style="left:0;top:16.4px;width:292.8px;height:1px;background:#e1e6ee"></div>
<div class="a" style="left:0;top:17px;width:278.5px;height:16px;background:#a8c0de"></div>
<div class="c" style="left:0.0px;top:18.6px;width:39.5px;height:15.7px;line-height:15.7px;text-align:right;padding-right:3px;color:#e8242a;">7.725</div>
<div class="c" style="left:39.5px;top:18.6px;width:39.0px;height:15.7px;line-height:15.7px;text-align:right;padding-right:3px;">39.83</div>
<div class="c" style="left:78.5px;top:18.6px;width:40.0px;height:15.7px;line-height:15.7px;text-align:right;padding-right:3px;">-0.56</div>
<div class="c" style="left:118.5px;top:18.6px;width:39.6px;height:15.7px;line-height:15.7px;text-align:right;padding-right:3px;">24.97</div>
<div class="c" style="left:158.1px;top:18.6px;width:39.1px;height:15.7px;line-height:15.7px;text-align:right;padding-right:3px;"></div>
<div class="c" style="left:197.2px;top:18.6px;width:40.0px;height:15.7px;line-height:15.7px;text-align:right;padding-right:3px;"></div>
<div class="c" style="left:237.2px;top:18.6px;width:41.3px;height:15.7px;line-height:15.7px;text-align:right;padding-right:3px;"></div>
<div class="a" style="left:0;top:32px;width:278.5px;height:1px;background:rgba(255,255,255,0.22)"></div>
<div class="a" style="left:0;top:33px;width:278.5px;height:16px;background:#a8c0de"></div>
<div class="c" style="left:0.0px;top:34.3px;width:39.5px;height:15.7px;line-height:15.7px;text-align:right;padding-right:3px;color:#e8242a;">8.875</div>
<div class="c" style="left:39.5px;top:34.3px;width:39.0px;height:15.7px;line-height:15.7px;text-align:right;padding-right:3px;">43.35</div>
<div class="c" style="left:78.5px;top:34.3px;width:40.0px;height:15.7px;line-height:15.7px;text-align:right;padding-right:3px;">-0.58</div>
<div class="c" style="left:118.5px;top:34.3px;width:39.6px;height:15.7px;line-height:15.7px;text-align:right;padding-right:3px;">25.46</div>
<div class="c" style="left:158.1px;top:34.3px;width:39.1px;height:15.7px;line-height:15.7px;text-align:right;padding-right:3px;"></div>
<div class="c" style="left:197.2px;top:34.3px;width:40.0px;height:15.7px;line-height:15.7px;text-align:right;padding-right:3px;"></div>
<div class="c" style="left:237.2px;top:34.3px;width:41.3px;height:15.7px;line-height:15.7px;text-align:right;padding-right:3px;"></div>
<div class="a" style="left:0;top:48px;width:278.5px;height:1px;background:rgba(255,255,255,0.22)"></div>
<div class="a" style="left:0;top:49px;width:278.5px;height:16px;background:#a8c0de"></div>
<div class="c" style="left:0.0px;top:50.1px;width:39.5px;height:15.7px;line-height:15.7px;text-align:right;padding-right:3px;color:#e8242a;">10.125</div>
<div class="c" style="left:39.5px;top:50.1px;width:39.0px;height:15.7px;line-height:15.7px;text-align:right;padding-right:3px;">46.84</div>
<div class="c" style="left:78.5px;top:50.1px;width:40.0px;height:15.7px;line-height:15.7px;text-align:right;padding-right:3px;">-0.60</div>
<div class="c" style="left:118.5px;top:50.1px;width:39.6px;height:15.7px;line-height:15.7px;text-align:right;padding-right:3px;">25.73</div>
<div class="c" style="left:158.1px;top:50.1px;width:39.1px;height:15.7px;line-height:15.7px;text-align:right;padding-right:3px;"></div>
<div class="c" style="left:197.2px;top:50.1px;width:40.0px;height:15.7px;line-height:15.7px;text-align:right;padding-right:3px;"></div>
<div class="c" style="left:237.2px;top:50.1px;width:41.3px;height:15.7px;line-height:15.7px;text-align:right;padding-right:3px;"></div>
<div class="a" style="left:0;top:64px;width:278.5px;height:1px;background:rgba(255,255,255,0.22)"></div>
<div class="a" style="left:0;top:65px;width:278.5px;height:15px;background:#a8c0de"></div>
<div class="c" style="left:0.0px;top:65.8px;width:39.5px;height:15.7px;line-height:15.7px;text-align:right;padding-right:3px;color:#e8242a;">11.425</div>
<div class="c" style="left:39.5px;top:65.8px;width:39.0px;height:15.7px;line-height:15.7px;text-align:right;padding-right:3px;">50.25</div>
<div class="c" style="left:78.5px;top:65.8px;width:40.0px;height:15.7px;line-height:15.7px;text-align:right;padding-right:3px;">-0.61</div>
<div class="c" style="left:118.5px;top:65.8px;width:39.6px;height:15.7px;line-height:15.7px;text-align:right;padding-right:3px;">25.81</div>
<div class="c" style="left:158.1px;top:65.8px;width:39.1px;height:15.7px;line-height:15.7px;text-align:right;padding-right:3px;"></div>
<div class="c" style="left:197.2px;top:65.8px;width:40.0px;height:15.7px;line-height:15.7px;text-align:right;padding-right:3px;"></div>
<div class="c" style="left:237.2px;top:65.8px;width:41.3px;height:15.7px;line-height:15.7px;text-align:right;padding-right:3px;"></div>
<div class="a" style="left:0;top:79px;width:278.5px;height:1px;background:rgba(255,255,255,0.22)"></div>
<div class="a" style="left:0;top:80px;width:278.5px;height:16px;background:#a8c0de"></div>
<div class="c" style="left:0.0px;top:81.5px;width:39.5px;height:15.7px;line-height:15.7px;text-align:right;padding-right:3px;color:#e8242a;">12.825</div>
<div class="c" style="left:39.5px;top:81.5px;width:39.0px;height:15.7px;line-height:15.7px;text-align:right;padding-right:3px;">53.58</div>
<div class="c" style="left:78.5px;top:81.5px;width:40.0px;height:15.7px;line-height:15.7px;text-align:right;padding-right:3px;">-0.62</div>
<div class="c" style="left:118.5px;top:81.5px;width:39.6px;height:15.7px;line-height:15.7px;text-align:right;padding-right:3px;">25.71</div>
<div class="c" style="left:158.1px;top:81.5px;width:39.1px;height:15.7px;line-height:15.7px;text-align:right;padding-right:3px;"></div>
<div class="c" style="left:197.2px;top:81.5px;width:40.0px;height:15.7px;line-height:15.7px;text-align:right;padding-right:3px;"></div>
<div class="c" style="left:237.2px;top:81.5px;width:41.3px;height:15.7px;line-height:15.7px;text-align:right;padding-right:3px;"></div>
<div class="a" style="left:0;top:95px;width:278.5px;height:1px;background:rgba(255,255,255,0.22)"></div>
<div class="a" style="left:0;top:96px;width:278.5px;height:16px;background:#a8c0de"></div>
<div class="c" style="left:0.0px;top:97.3px;width:39.5px;height:15.7px;line-height:15.7px;text-align:right;padding-right:3px;color:#e8242a;">14.35</div>
<div class="c" style="left:39.5px;top:97.3px;width:39.0px;height:15.7px;line-height:15.7px;text-align:right;padding-right:3px;">56.80</div>
<div class="c" style="left:78.5px;top:97.3px;width:40.0px;height:15.7px;line-height:15.7px;text-align:right;padding-right:3px;">-0.63</div>
<div class="c" style="left:118.5px;top:97.3px;width:39.6px;height:15.7px;line-height:15.7px;text-align:right;padding-right:3px;">25.44</div>
<div class="c" style="left:158.1px;top:97.3px;width:39.1px;height:15.7px;line-height:15.7px;text-align:right;padding-right:3px;"></div>
<div class="c" style="left:197.2px;top:97.3px;width:40.0px;height:15.7px;line-height:15.7px;text-align:right;padding-right:3px;"></div>
<div class="c" style="left:237.2px;top:97.3px;width:41.3px;height:15.7px;line-height:15.7px;text-align:right;padding-right:3px;"></div>
<div class="a" style="left:0;top:111px;width:278.5px;height:1px;background:rgba(255,255,255,0.22)"></div>
<div class="a" style="left:0;top:112px;width:278.5px;height:16px;background:#a8c0de"></div>
<div class="c" style="left:0.0px;top:113.0px;width:39.5px;height:15.7px;line-height:15.7px;text-align:right;padding-right:3px;color:#e8242a;">15.925</div>
<div class="c" style="left:39.5px;top:113.0px;width:39.0px;height:15.7px;line-height:15.7px;text-align:right;padding-right:3px;">59.90</div>
<div class="c" style="left:78.5px;top:113.0px;width:40.0px;height:15.7px;line-height:15.7px;text-align:right;padding-right:3px;">-0.63</div>
<div class="c" style="left:118.5px;top:113.0px;width:39.6px;height:15.7px;line-height:15.7px;text-align:right;padding-right:3px;">25.01</div>
<div class="c" style="left:158.1px;top:113.0px;width:39.1px;height:15.7px;line-height:15.7px;text-align:right;padding-right:3px;"></div>
<div class="c" style="left:197.2px;top:113.0px;width:40.0px;height:15.7px;line-height:15.7px;text-align:right;padding-right:3px;"></div>
<div class="c" style="left:237.2px;top:113.0px;width:41.3px;height:15.7px;line-height:15.7px;text-align:right;padding-right:3px;"></div>
<div class="a" style="left:0;top:127px;width:278.5px;height:1px;background:rgba(255,255,255,0.22)"></div>
<div class="a" style="left:0;top:128px;width:278.5px;height:15px;background:#a8c0de"></div>
<div class="c" style="left:0.0px;top:128.7px;width:39.5px;height:15.7px;line-height:15.7px;text-align:right;padding-right:3px;color:#e8242a;">17.60</div>
<div class="c" style="left:39.5px;top:128.7px;width:39.0px;height:15.7px;line-height:15.7px;text-align:right;padding-right:3px;">62.84</div>
<div class="c" style="left:78.5px;top:128.7px;width:40.0px;height:15.7px;line-height:15.7px;text-align:right;padding-right:3px;">-0.63</div>
<div class="c" style="left:118.5px;top:128.7px;width:39.6px;height:15.7px;line-height:15.7px;text-align:right;padding-right:3px;">24.46</div>
<div class="c" style="left:158.1px;top:128.7px;width:39.1px;height:15.7px;line-height:15.7px;text-align:right;padding-right:3px;"></div>
<div class="c" style="left:197.2px;top:128.7px;width:40.0px;height:15.7px;line-height:15.7px;text-align:right;padding-right:3px;"></div>
<div class="c" style="left:237.2px;top:128.7px;width:41.3px;height:15.7px;line-height:15.7px;text-align:right;padding-right:3px;"></div>
<div class="a" style="left:0;top:142px;width:278.5px;height:1px;background:rgba(255,255,255,0.22)"></div>
<div class="a" style="left:0;top:143px;width:278.5px;height:16px;background:#a8c0de"></div>
<div class="c" style="left:0.0px;top:144.4px;width:39.5px;height:15.7px;line-height:15.7px;text-align:right;padding-right:3px;color:#e8242a;">19.35</div>
<div class="c" style="left:39.5px;top:144.4px;width:39.0px;height:15.7px;line-height:15.7px;text-align:right;padding-right:3px;">65.61</div>
<div class="c" style="left:78.5px;top:144.4px;width:40.0px;height:15.7px;line-height:15.7px;text-align:right;padding-right:3px;">-0.62</div>
<div class="c" style="left:118.5px;top:144.4px;width:39.6px;height:15.7px;line-height:15.7px;text-align:right;padding-right:3px;">23.81</div>
<div class="c" style="left:158.1px;top:144.4px;width:39.1px;height:15.7px;line-height:15.7px;text-align:right;padding-right:3px;"></div>
<div class="c" style="left:197.2px;top:144.4px;width:40.0px;height:15.7px;line-height:15.7px;text-align:right;padding-right:3px;"></div>
<div class="c" style="left:237.2px;top:144.4px;width:41.3px;height:15.7px;line-height:15.7px;text-align:right;padding-right:3px;"></div>
<div class="a" style="left:0;top:158px;width:278.5px;height:1px;background:rgba(255,255,255,0.22)"></div>
<div class="a" style="left:0;top:159px;width:278.5px;height:16px;background:#a8c0de"></div>
<div class="c" style="left:0.0px;top:160.2px;width:39.5px;height:15.7px;line-height:15.7px;text-align:right;padding-right:3px;color:#e8242a;">21.15</div>
<div class="c" style="left:39.5px;top:160.2px;width:39.0px;height:15.7px;line-height:15.7px;text-align:right;padding-right:3px;">68.25</div>
<div class="c" style="left:78.5px;top:160.2px;width:40.0px;height:15.7px;line-height:15.7px;text-align:right;padding-right:3px;">-0.61</div>
<div class="c" style="left:118.5px;top:160.2px;width:39.6px;height:15.7px;line-height:15.7px;text-align:right;padding-right:3px;">23.06</div>
<div class="c" style="left:158.1px;top:160.2px;width:39.1px;height:15.7px;line-height:15.7px;text-align:right;padding-right:3px;"></div>
<div class="c" style="left:197.2px;top:160.2px;width:40.0px;height:15.7px;line-height:15.7px;text-align:right;padding-right:3px;"></div>
<div class="c" style="left:237.2px;top:160.2px;width:41.3px;height:15.7px;line-height:15.7px;text-align:right;padding-right:3px;"></div>
<div class="a" style="left:0;top:174px;width:278.5px;height:1px;background:rgba(255,255,255,0.22)"></div>
<div class="a" style="left:39.0px;top:0;width:1px;height:172.4px;background:rgba(255,255,255,0.3)"></div>
<div class="a" style="left:39.0px;top:0;width:1px;height:17.4px;background:#dde3ec"></div>
<div class="a" style="left:78.0px;top:0;width:1px;height:172.4px;background:rgba(255,255,255,0.3)"></div>
<div class="a" style="left:78.0px;top:0;width:1px;height:17.4px;background:#dde3ec"></div>
<div class="a" style="left:118.0px;top:0;width:1px;height:172.4px;background:rgba(255,255,255,0.3)"></div>
<div class="a" style="left:118.0px;top:0;width:1px;height:17.4px;background:#dde3ec"></div>
<div class="a" style="left:157.6px;top:0;width:1px;height:172.4px;background:rgba(255,255,255,0.3)"></div>
<div class="a" style="left:157.6px;top:0;width:1px;height:17.4px;background:#dde3ec"></div>
<div class="a" style="left:196.7px;top:0;width:1px;height:172.4px;background:rgba(255,255,255,0.3)"></div>
<div class="a" style="left:196.7px;top:0;width:1px;height:17.4px;background:#dde3ec"></div>
<div class="a" style="left:236.7px;top:0;width:1px;height:172.4px;background:rgba(255,255,255,0.3)"></div>
<div class="a" style="left:236.7px;top:0;width:1px;height:17.4px;background:#dde3ec"></div>
<div class="a" style="left:278.0px;top:0;width:1px;height:172.4px;background:rgba(255,255,255,0.3)"></div>
<div class="a" style="left:278.0px;top:0;width:1px;height:17.4px;background:#dde3ec"></div>
<div class="a" style="left:278.5px;top:17.4px;width:14.3px;height:155.0px;background:#d7dde8"></div>
<div class="a" style="left:281.5px;top:84.4px;width:8.3px;height:14.0px;background:#a9b1bd"></div>
<svg class="a" style="left:282.6px;top:23.4px" width="6" height="4"><path d="M0 4L3 0L6 4Z" fill="#5d6573"/></svg>
<svg class="a" style="left:282.6px;top:162.4px" width="6" height="4"><path d="M0 0L3 4L6 0Z" fill="#5d6573"/></svg>
</div>
<div class="a" style="left:-5.0px;top:411.2px;width:254.0px;height:181.8px;border:1px solid #b7c1d1;background:#d9dfea"></div>
<div class="a" style="left:-4.0px;top:412.2px;width:252.0px;height:179.8px;background:#fff;overflow:hidden">
<div class="a" style="left:0;top:0;width:252.0px;height:17.4px;background:#f6f8fc"></div>
<div class="c" style="left:0.0px;top:-0.8px;width:42.3px;height:17.4px;line-height:17.4px;text-align:center;">Delta</div>
<div class="c" style="left:42.3px;top:-0.8px;width:41.7px;height:17.4px;line-height:17.4px;text-align:center;">Theta</div>
<div class="c" style="left:84.0px;top:-0.8px;width:41.3px;height:17.4px;line-height:17.4px;text-align:center;">Vega</div>
<div class="c" style="left:125.3px;top:-0.8px;width:42.0px;height:17.4px;line-height:17.4px;text-align:center;">OrigPr...</div>
<div class="c" style="left:167.3px;top:-0.8px;width:41.4px;height:17.4px;line-height:17.4px;text-align:center;">Model</div>
<div class="c" style="left:208.7px;top:-0.8px;width:43.3px;height:17.4px;line-height:17.4px;text-align:center;">Pos</div>
<div class="a" style="left:0;top:16.4px;width:252.0px;height:1px;background:#e1e6ee"></div>
<div class="a" style="left:0;top:17px;width:252.0px;height:16px;background:#a8c0de"></div>
<div class="c" style="left:0.0px;top:18.6px;width:42.3px;height:15.7px;line-height:15.7px;text-align:right;padding-right:3px;">-32.61</div>
<div class="c" style="left:42.3px;top:18.6px;width:41.7px;height:15.7px;line-height:15.7px;text-align:right;padding-right:3px;">-1.24</div>
<div class="c" style="left:84.0px;top:18.6px;width:41.3px;height:15.7px;line-height:15.7px;text-align:right;padding-right:3px;">12.78</div>
<div class="c" style="left:125.3px;top:18.6px;width:42.0px;height:15.7px;line-height:15.7px;text-align:right;padding-right:3px;">4.55</div>
<div class="c" style="left:167.3px;top:18.6px;width:41.4px;height:15.7px;line-height:15.7px;text-align:right;padding-right:3px;"></div>
<div class="c" style="left:208.7px;top:18.6px;width:43.3px;height:15.7px;line-height:15.7px;text-align:right;padding-right:3px;">+1</div>
<div class="a" style="left:0;top:32px;width:252.0px;height:1px;background:rgba(255,255,255,0.22)"></div>
<div class="a" style="left:0;top:33px;width:252.0px;height:16px;background:#a8c0de"></div>
<div class="c" style="left:0.0px;top:34.3px;width:42.3px;height:15.7px;line-height:15.7px;text-align:right;padding-right:3px;">-28.47</div>
<div class="c" style="left:42.3px;top:34.3px;width:41.7px;height:15.7px;line-height:15.7px;text-align:right;padding-right:3px;">-1.18</div>
<div class="c" style="left:84.0px;top:34.3px;width:41.3px;height:15.7px;line-height:15.7px;text-align:right;padding-right:3px;">12.03</div>
<div class="c" style="left:125.3px;top:34.3px;width:42.0px;height:15.7px;line-height:15.7px;text-align:right;padding-right:3px;"></div>
<div class="c" style="left:167.3px;top:34.3px;width:41.4px;height:15.7px;line-height:15.7px;text-align:right;padding-right:3px;"></div>
<div class="c" style="left:208.7px;top:34.3px;width:43.3px;height:15.7px;line-height:15.7px;text-align:right;padding-right:3px;"></div>
<div class="a" style="left:0;top:48px;width:252.0px;height:1px;background:rgba(255,255,255,0.22)"></div>
<div class="a" style="left:0;top:49px;width:252.0px;height:16px;background:#a8c0de"></div>
<div class="c" style="left:0.0px;top:50.1px;width:42.3px;height:15.7px;line-height:15.7px;text-align:right;padding-right:3px;">-24.63</div>
<div class="c" style="left:42.3px;top:50.1px;width:41.7px;height:15.7px;line-height:15.7px;text-align:right;padding-right:3px;">-1.11</div>
<div class="c" style="left:84.0px;top:50.1px;width:41.3px;height:15.7px;line-height:15.7px;text-align:right;padding-right:3px;">11.18</div>
<div class="c" style="left:125.3px;top:50.1px;width:42.0px;height:15.7px;line-height:15.7px;text-align:right;padding-right:3px;"></div>
<div class="c" style="left:167.3px;top:50.1px;width:41.4px;height:15.7px;line-height:15.7px;text-align:right;padding-right:3px;"></div>
<div class="c" style="left:208.7px;top:50.1px;width:43.3px;height:15.7px;line-height:15.7px;text-align:right;padding-right:3px;"></div>
<div class="a" style="left:0;top:64px;width:252.0px;height:1px;background:rgba(255,255,255,0.22)"></div>
<div class="a" style="left:0;top:65px;width:252.0px;height:15px;background:#a8c0de"></div>
<div class="c" style="left:0.0px;top:65.8px;width:42.3px;height:15.7px;line-height:15.7px;text-align:right;padding-right:3px;">-20.99</div>
<div class="c" style="left:42.3px;top:65.8px;width:41.7px;height:15.7px;line-height:15.7px;text-align:right;padding-right:3px;">-1.02</div>
<div class="c" style="left:84.0px;top:65.8px;width:41.3px;height:15.7px;line-height:15.7px;text-align:right;padding-right:3px;">10.21</div>
<div class="c" style="left:125.3px;top:65.8px;width:42.0px;height:15.7px;line-height:15.7px;text-align:right;padding-right:3px;">2.58</div>
<div class="c" style="left:167.3px;top:65.8px;width:41.4px;height:15.7px;line-height:15.7px;text-align:right;padding-right:3px;"></div>
<div class="c" style="left:208.7px;top:65.8px;width:43.3px;height:15.7px;line-height:15.7px;text-align:right;padding-right:3px;">-1</div>
<div class="a" style="left:0;top:79px;width:252.0px;height:1px;background:rgba(255,255,255,0.22)"></div>
<div class="a" style="left:0;top:80px;width:252.0px;height:16px;background:#a8c0de"></div>
<div class="c" style="left:0.0px;top:81.5px;width:42.3px;height:15.7px;line-height:15.7px;text-align:right;padding-right:3px;">-17.73</div>
<div class="c" style="left:42.3px;top:81.5px;width:41.7px;height:15.7px;line-height:15.7px;text-align:right;padding-right:3px;">-0.92</div>
<div class="c" style="left:84.0px;top:81.5px;width:41.3px;height:15.7px;line-height:15.7px;text-align:right;padding-right:3px;">9.21</div>
<div class="c" style="left:125.3px;top:81.5px;width:42.0px;height:15.7px;line-height:15.7px;text-align:right;padding-right:3px;"></div>
<div class="c" style="left:167.3px;top:81.5px;width:41.4px;height:15.7px;line-height:15.7px;text-align:right;padding-right:3px;"></div>
<div class="c" style="left:208.7px;top:81.5px;width:43.3px;height:15.7px;line-height:15.7px;text-align:right;padding-right:3px;"></div>
<div class="a" style="left:0;top:95px;width:252.0px;height:1px;background:rgba(255,255,255,0.22)"></div>
<div class="a" style="left:0;top:96px;width:252.0px;height:16px;background:#a8c0de"></div>
<div class="c" style="left:0.0px;top:97.3px;width:42.3px;height:15.7px;line-height:15.7px;text-align:right;padding-right:3px;">-14.81</div>
<div class="c" style="left:42.3px;top:97.3px;width:41.7px;height:15.7px;line-height:15.7px;text-align:right;padding-right:3px;">-0.82</div>
<div class="c" style="left:84.0px;top:97.3px;width:41.3px;height:15.7px;line-height:15.7px;text-align:right;padding-right:3px;">8.19</div>
<div class="c" style="left:125.3px;top:97.3px;width:42.0px;height:15.7px;line-height:15.7px;text-align:right;padding-right:3px;"></div>
<div class="c" style="left:167.3px;top:97.3px;width:41.4px;height:15.7px;line-height:15.7px;text-align:right;padding-right:3px;"></div>
<div class="c" style="left:208.7px;top:97.3px;width:43.3px;height:15.7px;line-height:15.7px;text-align:right;padding-right:3px;"></div>
<div class="a" style="left:0;top:111px;width:252.0px;height:1px;background:rgba(255,255,255,0.22)"></div>
<div class="a" style="left:0;top:112px;width:252.0px;height:16px;background:#c8e4ea"></div>
<div class="c" style="left:0.0px;top:113.0px;width:42.3px;height:15.7px;line-height:15.7px;text-align:right;padding-right:3px;">-12.27</div>
<div class="c" style="left:42.3px;top:113.0px;width:41.7px;height:15.7px;line-height:15.7px;text-align:right;padding-right:3px;">-0.73</div>
<div class="c" style="left:84.0px;top:113.0px;width:41.3px;height:15.7px;line-height:15.7px;text-align:right;padding-right:3px;">7.21</div>
<div class="c" style="left:125.3px;top:113.0px;width:42.0px;height:15.7px;line-height:15.7px;text-align:right;padding-right:3px;"></div>
<div class="c" style="left:167.3px;top:113.0px;width:41.4px;height:15.7px;line-height:15.7px;text-align:right;padding-right:3px;"></div>
<div class="c" style="left:208.7px;top:113.0px;width:43.3px;height:15.7px;line-height:15.7px;text-align:right;padding-right:3px;"></div>
<div class="a" style="left:0;top:127px;width:252.0px;height:1px;background:rgba(255,255,255,0.22)"></div>
<div class="a" style="left:0;top:128px;width:252.0px;height:15px;background:#c8e4ea"></div>
<div class="c" style="left:0.0px;top:128.7px;width:42.3px;height:15.7px;line-height:15.7px;text-align:right;padding-right:3px;">-10.05</div>
<div class="c" style="left:42.3px;top:128.7px;width:41.7px;height:15.7px;line-height:15.7px;text-align:right;padding-right:3px;">-0.63</div>
<div class="c" style="left:84.0px;top:128.7px;width:41.3px;height:15.7px;line-height:15.7px;text-align:right;padding-right:3px;">6.24</div>
<div class="c" style="left:125.3px;top:128.7px;width:42.0px;height:15.7px;line-height:15.7px;text-align:right;padding-right:3px;"></div>
<div class="c" style="left:167.3px;top:128.7px;width:41.4px;height:15.7px;line-height:15.7px;text-align:right;padding-right:3px;"></div>
<div class="c" style="left:208.7px;top:128.7px;width:43.3px;height:15.7px;line-height:15.7px;text-align:right;padding-right:3px;"></div>
<div class="a" style="left:0;top:142px;width:252.0px;height:1px;background:rgba(255,255,255,0.22)"></div>
<div class="a" style="left:0;top:143px;width:252.0px;height:16px;background:#c8e4ea"></div>
<div class="c" style="left:0.0px;top:144.4px;width:42.3px;height:15.7px;line-height:15.7px;text-align:right;padding-right:3px;">-8.22</div>
<div class="c" style="left:42.3px;top:144.4px;width:41.7px;height:15.7px;line-height:15.7px;text-align:right;padding-right:3px;">-0.55</div>
<div class="c" style="left:84.0px;top:144.4px;width:41.3px;height:15.7px;line-height:15.7px;text-align:right;padding-right:3px;">5.38</div>
<div class="c" style="left:125.3px;top:144.4px;width:42.0px;height:15.7px;line-height:15.7px;text-align:right;padding-right:3px;"></div>
<div class="c" style="left:167.3px;top:144.4px;width:41.4px;height:15.7px;line-height:15.7px;text-align:right;padding-right:3px;"></div>
<div class="c" style="left:208.7px;top:144.4px;width:43.3px;height:15.7px;line-height:15.7px;text-align:right;padding-right:3px;"></div>
<div class="a" style="left:0;top:158px;width:252.0px;height:1px;background:rgba(255,255,255,0.22)"></div>
<div class="a" style="left:0;top:159px;width:252.0px;height:16px;background:#c8e4ea"></div>
<div class="c" style="left:0.0px;top:160.2px;width:42.3px;height:15.7px;line-height:15.7px;text-align:right;padding-right:3px;">-6.66</div>
<div class="c" style="left:42.3px;top:160.2px;width:41.7px;height:15.7px;line-height:15.7px;text-align:right;padding-right:3px;">-0.47</div>
<div class="c" style="left:84.0px;top:160.2px;width:41.3px;height:15.7px;line-height:15.7px;text-align:right;padding-right:3px;">4.58</div>
<div class="c" style="left:125.3px;top:160.2px;width:42.0px;height:15.7px;line-height:15.7px;text-align:right;padding-right:3px;"></div>
<div class="c" style="left:167.3px;top:160.2px;width:41.4px;height:15.7px;line-height:15.7px;text-align:right;padding-right:3px;"></div>
<div class="c" style="left:208.7px;top:160.2px;width:43.3px;height:15.7px;line-height:15.7px;text-align:right;padding-right:3px;"></div>
<div class="a" style="left:0;top:174px;width:252.0px;height:1px;background:rgba(255,255,255,0.22)"></div>
<div class="a" style="left:0;top:175px;width:252.0px;height:15px;background:#c8e4ea"></div>
<div class="c" style="left:0.0px;top:175.9px;width:42.3px;height:15.7px;line-height:15.7px;text-align:right;padding-right:3px;">-5.36</div>
<div class="c" style="left:42.3px;top:175.9px;width:41.7px;height:15.7px;line-height:15.7px;text-align:right;padding-right:3px;">-0.41</div>
<div class="c" style="left:84.0px;top:175.9px;width:41.3px;height:15.7px;line-height:15.7px;text-align:right;padding-right:3px;">3.88</div>
<div class="c" style="left:125.3px;top:175.9px;width:42.0px;height:15.7px;line-height:15.7px;text-align:right;padding-right:3px;"></div>
<div class="c" style="left:167.3px;top:175.9px;width:41.4px;height:15.7px;line-height:15.7px;text-align:right;padding-right:3px;"></div>
<div class="c" style="left:208.7px;top:175.9px;width:43.3px;height:15.7px;line-height:15.7px;text-align:right;padding-right:3px;"></div>
<div class="a" style="left:0;top:189px;width:252.0px;height:1px;background:rgba(255,255,255,0.22)"></div>
<div class="a" style="left:41.8px;top:0;width:1px;height:179.8px;background:rgba(255,255,255,0.3)"></div>
<div class="a" style="left:41.8px;top:0;width:1px;height:17.4px;background:#dde3ec"></div>
<div class="a" style="left:83.5px;top:0;width:1px;height:179.8px;background:rgba(255,255,255,0.3)"></div>
<div class="a" style="left:83.5px;top:0;width:1px;height:17.4px;background:#dde3ec"></div>
<div class="a" style="left:124.8px;top:0;width:1px;height:179.8px;background:rgba(255,255,255,0.3)"></div>
<div class="a" style="left:124.8px;top:0;width:1px;height:17.4px;background:#dde3ec"></div>
<div class="a" style="left:166.8px;top:0;width:1px;height:179.8px;background:rgba(255,255,255,0.3)"></div>
<div class="a" style="left:166.8px;top:0;width:1px;height:17.4px;background:#dde3ec"></div>
<div class="a" style="left:208.2px;top:0;width:1px;height:179.8px;background:rgba(255,255,255,0.3)"></div>
<div class="a" style="left:208.2px;top:0;width:1px;height:17.4px;background:#dde3ec"></div>
<div class="a" style="left:251.5px;top:0;width:1px;height:179.8px;background:rgba(255,255,255,0.3)"></div>
<div class="a" style="left:251.5px;top:0;width:1px;height:17.4px;background:#dde3ec"></div>
</div>
<div class="a" style="left:250.5px;top:411.2px;width:294.8px;height:181.8px;border:1px solid #b7c1d1;background:#d9dfea"></div>
<div class="a" style="left:251.5px;top:412.2px;width:292.8px;height:179.8px;background:#fff;overflow:hidden">
<div class="a" style="left:0;top:0;width:292.8px;height:17.4px;background:#f6f8fc"></div>
<div class="c" style="left:0.0px;top:-0.8px;width:39.5px;height:17.4px;line-height:17.4px;text-align:center;">Mid</div>
<div class="c" style="left:39.5px;top:-0.8px;width:39.0px;height:17.4px;line-height:17.4px;text-align:center;">Delta</div>
<div class="c" style="left:78.5px;top:-0.8px;width:40.0px;height:17.4px;line-height:17.4px;text-align:center;">Theta</div>
<div class="c" style="left:118.5px;top:-0.8px;width:39.6px;height:17.4px;line-height:17.4px;text-align:center;">Vega</div>
<div class="c" style="left:158.1px;top:-0.8px;width:39.1px;height:17.4px;line-height:17.4px;text-align:center;">OrigP...</div>
<div class="c" style="left:197.2px;top:-0.8px;width:40.0px;height:17.4px;line-height:17.4px;text-align:center;">Model</div>
<div class="c" style="left:237.2px;top:-0.8px;width:41.3px;height:17.4px;line-height:17.4px;text-align:center;">Pos</div>
<div class="c" style="left:278.5px;top:-0.8px;width:14.3px;height:17.4px;line-height:17.4px;text-align:center;"></div>
<div class="a" style="left:0;top:16.4px;width:292.8px;height:1px;background:#e1e6ee"></div>
<div class="a" style="left:0;top:17px;width:278.5px;height:16px;background:#a8c0de"></div>
<div class="c" style="left:0.0px;top:18.6px;width:39.5px;height:15.7px;line-height:15.7px;text-align:right;padding-right:3px;color:#2f8f2f;">5.925</div>
<div class="c" style="left:39.5px;top:18.6px;width:39.0px;height:15.7px;line-height:15.7px;text-align:right;padding-right:3px;">-34.44</div>
<div class="c" style="left:78.5px;top:18.6px;width:40.0px;height:15.7px;line-height:15.7px;text-align:right;padding-right:3px;">-0.44</div>
<div class="c" style="left:118.5px;top:18.6px;width:39.6px;height:15.7px;line-height:15.7px;text-align:right;padding-right:3px;">23.83</div>
<div class="c" style="left:158.1px;top:18.6px;width:39.1px;height:15.7px;line-height:15.7px;text-align:right;padding-right:3px;"></div>
<div class="c" style="left:197.2px;top:18.6px;width:40.0px;height:15.7px;line-height:15.7px;text-align:right;padding-right:3px;"></div>
<div class="c" style="left:237.2px;top:18.6px;width:41.3px;height:15.7px;line-height:15.7px;text-align:right;padding-right:3px;"></div>
<div class="a" style="left:0;top:32px;width:278.5px;height:1px;background:rgba(255,255,255,0.22)"></div>
<div class="a" style="left:0;top:33px;width:278.5px;height:16px;background:#a8c0de"></div>
<div class="c" style="left:0.0px;top:34.3px;width:39.5px;height:15.7px;line-height:15.7px;text-align:right;padding-right:3px;color:#2f8f2f;">5.175</div>
<div class="c" style="left:39.5px;top:34.3px;width:39.0px;height:15.7px;line-height:15.7px;text-align:right;padding-right:3px;">-30.93</div>
<div class="c" style="left:78.5px;top:34.3px;width:40.0px;height:15.7px;line-height:15.7px;text-align:right;padding-right:3px;">-0.43</div>
<div class="c" style="left:118.5px;top:34.3px;width:39.6px;height:15.7px;line-height:15.7px;text-align:right;padding-right:3px;">22.81</div>
<div class="c" style="left:158.1px;top:34.3px;width:39.1px;height:15.7px;line-height:15.7px;text-align:right;padding-right:3px;"></div>
<div class="c" style="left:197.2px;top:34.3px;width:40.0px;height:15.7px;line-height:15.7px;text-align:right;padding-right:3px;"></div>
<div class="c" style="left:237.2px;top:34.3px;width:41.3px;height:15.7px;line-height:15.7px;text-align:right;padding-right:3px;"></div>
<div class="a" style="left:0;top:48px;width:278.5px;height:1px;background:rgba(255,255,255,0.22)"></div>
<div class="a" style="left:0;top:49px;width:278.5px;height:16px;background:#a8c0de"></div>
<div class="c" style="left:0.0px;top:50.1px;width:39.5px;height:15.7px;line-height:15.7px;text-align:right;padding-right:3px;color:#2f8f2f;">4.475</div>
<div class="c" style="left:39.5px;top:50.1px;width:39.0px;height:15.7px;line-height:15.7px;text-align:right;padding-right:3px;">-27.60</div>
<div class="c" style="left:78.5px;top:50.1px;width:40.0px;height:15.7px;line-height:15.7px;text-align:right;padding-right:3px;">-0.41</div>
<div class="c" style="left:118.5px;top:50.1px;width:39.6px;height:15.7px;line-height:15.7px;text-align:right;padding-right:3px;">21.63</div>
<div class="c" style="left:158.1px;top:50.1px;width:39.1px;height:15.7px;line-height:15.7px;text-align:right;padding-right:3px;"></div>
<div class="c" style="left:197.2px;top:50.1px;width:40.0px;height:15.7px;line-height:15.7px;text-align:right;padding-right:3px;"></div>
<div class="c" style="left:237.2px;top:50.1px;width:41.3px;height:15.7px;line-height:15.7px;text-align:right;padding-right:3px;"></div>
<div class="a" style="left:0;top:64px;width:278.5px;height:1px;background:rgba(255,255,255,0.22)"></div>
<div class="a" style="left:0;top:65px;width:278.5px;height:15px;background:#a8c0de"></div>
<div class="c" style="left:0.0px;top:65.8px;width:39.5px;height:15.7px;line-height:15.7px;text-align:right;padding-right:3px;color:#2f8f2f;">3.875</div>
<div class="c" style="left:39.5px;top:65.8px;width:39.0px;height:15.7px;line-height:15.7px;text-align:right;padding-right:3px;">-24.54</div>
<div class="c" style="left:78.5px;top:65.8px;width:40.0px;height:15.7px;line-height:15.7px;text-align:right;padding-right:3px;">-0.40</div>
<div class="c" style="left:118.5px;top:65.8px;width:39.6px;height:15.7px;line-height:15.7px;text-align:right;padding-right:3px;">20.36</div>
<div class="c" style="left:158.1px;top:65.8px;width:39.1px;height:15.7px;line-height:15.7px;text-align:right;padding-right:3px;"></div>
<div class="c" style="left:197.2px;top:65.8px;width:40.0px;height:15.7px;line-height:15.7px;text-align:right;padding-right:3px;"></div>
<div class="c" style="left:237.2px;top:65.8px;width:41.3px;height:15.7px;line-height:15.7px;text-align:right;padding-right:3px;"></div>
<div class="a" style="left:0;top:79px;width:278.5px;height:1px;background:rgba(255,255,255,0.22)"></div>
<div class="a" style="left:0;top:80px;width:278.5px;height:16px;background:#a8c0de"></div>
<div class="c" style="left:0.0px;top:81.5px;width:39.5px;height:15.7px;line-height:15.7px;text-align:right;padding-right:3px;color:#2f8f2f;">3.35</div>
<div class="c" style="left:39.5px;top:81.5px;width:39.0px;height:15.7px;line-height:15.7px;text-align:right;padding-right:3px;">-21.73</div>
<div class="c" style="left:78.5px;top:81.5px;width:40.0px;height:15.7px;line-height:15.7px;text-align:right;padding-right:3px;">-0.37</div>
<div class="c" style="left:118.5px;top:81.5px;width:39.6px;height:15.7px;line-height:15.7px;text-align:right;padding-right:3px;">19.03</div>
<div class="c" style="left:158.1px;top:81.5px;width:39.1px;height:15.7px;line-height:15.7px;text-align:right;padding-right:3px;"></div>
<div class="c" style="left:197.2px;top:81.5px;width:40.0px;height:15.7px;line-height:15.7px;text-align:right;padding-right:3px;"></div>
<div class="c" style="left:237.2px;top:81.5px;width:41.3px;height:15.7px;line-height:15.7px;text-align:right;padding-right:3px;"></div>
<div class="a" style="left:0;top:95px;width:278.5px;height:1px;background:rgba(255,255,255,0.22)"></div>
<div class="a" style="left:0;top:96px;width:278.5px;height:16px;background:#a8c0de"></div>
<div class="c" style="left:0.0px;top:97.3px;width:39.5px;height:15.7px;line-height:15.7px;text-align:right;padding-right:3px;color:#2f8f2f;">2.87</div>
<div class="c" style="left:39.5px;top:97.3px;width:39.0px;height:15.7px;line-height:15.7px;text-align:right;padding-right:3px;">-19.12</div>
<div class="c" style="left:78.5px;top:97.3px;width:40.0px;height:15.7px;line-height:15.7px;text-align:right;padding-right:3px;">-0.35</div>
<div class="c" style="left:118.5px;top:97.3px;width:39.6px;height:15.7px;line-height:15.7px;text-align:right;padding-right:3px;">17.63</div>
<div class="c" style="left:158.1px;top:97.3px;width:39.1px;height:15.7px;line-height:15.7px;text-align:right;padding-right:3px;"></div>
<div class="c" style="left:197.2px;top:97.3px;width:40.0px;height:15.7px;line-height:15.7px;text-align:right;padding-right:3px;"></div>
<div class="c" style="left:237.2px;top:97.3px;width:41.3px;height:15.7px;line-height:15.7px;text-align:right;padding-right:3px;"></div>
<div class="a" style="left:0;top:111px;width:278.5px;height:1px;background:rgba(255,255,255,0.22)"></div>
<div class="a" style="left:0;top:112px;width:278.5px;height:16px;background:#a8c0de"></div>
<div class="c" style="left:0.0px;top:113.0px;width:39.5px;height:15.7px;line-height:15.7px;text-align:right;padding-right:3px;color:#2f8f2f;">2.455</div>
<div class="c" style="left:39.5px;top:113.0px;width:39.0px;height:15.7px;line-height:15.7px;text-align:right;padding-right:3px;">-16.75</div>
<div class="c" style="left:78.5px;top:113.0px;width:40.0px;height:15.7px;line-height:15.7px;text-align:right;padding-right:3px;">-0.33</div>
<div class="c" style="left:118.5px;top:113.0px;width:39.6px;height:15.7px;line-height:15.7px;text-align:right;padding-right:3px;">16.22</div>
<div class="c" style="left:158.1px;top:113.0px;width:39.1px;height:15.7px;line-height:15.7px;text-align:right;padding-right:3px;"></div>
<div class="c" style="left:197.2px;top:113.0px;width:40.0px;height:15.7px;line-height:15.7px;text-align:right;padding-right:3px;"></div>
<div class="c" style="left:237.2px;top:113.0px;width:41.3px;height:15.7px;line-height:15.7px;text-align:right;padding-right:3px;"></div>
<div class="a" style="left:0;top:127px;width:278.5px;height:1px;background:rgba(255,255,255,0.22)"></div>
<div class="a" style="left:0;top:128px;width:278.5px;height:15px;background:#a8c0de"></div>
<div class="c" style="left:0.0px;top:128.7px;width:39.5px;height:15.7px;line-height:15.7px;text-align:right;padding-right:3px;color:#2f8f2f;">2.095</div>
<div class="c" style="left:39.5px;top:128.7px;width:39.0px;height:15.7px;line-height:15.7px;text-align:right;padding-right:3px;">-14.62</div>
<div class="c" style="left:78.5px;top:128.7px;width:40.0px;height:15.7px;line-height:15.7px;text-align:right;padding-right:3px;">-0.30</div>
<div class="c" style="left:118.5px;top:128.7px;width:39.6px;height:15.7px;line-height:15.7px;text-align:right;padding-right:3px;">14.83</div>
<div class="c" style="left:158.1px;top:128.7px;width:39.1px;height:15.7px;line-height:15.7px;text-align:right;padding-right:3px;"></div>
<div class="c" style="left:197.2px;top:128.7px;width:40.0px;height:15.7px;line-height:15.7px;text-align:right;padding-right:3px;"></div>
<div class="c" style="left:237.2px;top:128.7px;width:41.3px;height:15.7px;line-height:15.7px;text-align:right;padding-right:3px;"></div>
<div class="a" style="left:0;top:142px;width:278.5px;height:1px;background:rgba(255,255,255,0.22)"></div>
<div class="a" style="left:0;top:143px;width:278.5px;height:16px;background:#c8e4ea"></div>
<div class="c" style="left:0.0px;top:144.4px;width:39.5px;height:15.7px;line-height:15.7px;text-align:right;padding-right:3px;color:#2f8f2f;">1.78</div>
<div class="c" style="left:39.5px;top:144.4px;width:39.0px;height:15.7px;line-height:15.7px;text-align:right;padding-right:3px;">-12.70</div>
<div class="c" style="left:78.5px;top:144.4px;width:40.0px;height:15.7px;line-height:15.7px;text-align:right;padding-right:3px;">-0.28</div>
<div class="c" style="left:118.5px;top:144.4px;width:39.6px;height:15.7px;line-height:15.7px;text-align:right;padding-right:3px;">13.47</div>
<div class="c" style="left:158.1px;top:144.4px;width:39.1px;height:15.7px;line-height:15.7px;text-align:right;padding-right:3px;"></div>
<div class="c" style="left:197.2px;top:144.4px;width:40.0px;height:15.7px;line-height:15.7px;text-align:right;padding-right:3px;"></div>
<div class="c" style="left:237.2px;top:144.4px;width:41.3px;height:15.7px;line-height:15.7px;text-align:right;padding-right:3px;"></div>
<div class="a" style="left:0;top:158px;width:278.5px;height:1px;background:rgba(255,255,255,0.22)"></div>
<div class="a" style="left:0;top:159px;width:278.5px;height:16px;background:#c8e4ea"></div>
<div class="c" style="left:0.0px;top:160.2px;width:39.5px;height:15.7px;line-height:15.7px;text-align:right;padding-right:3px;color:#2f8f2f;">1.52</div>
<div class="c" style="left:39.5px;top:160.2px;width:39.0px;height:15.7px;line-height:15.7px;text-align:right;padding-right:3px;">-11.04</div>
<div class="c" style="left:78.5px;top:160.2px;width:40.0px;height:15.7px;line-height:15.7px;text-align:right;padding-right:3px;">-0.26</div>
<div class="c" style="left:118.5px;top:160.2px;width:39.6px;height:15.7px;line-height:15.7px;text-align:right;padding-right:3px;">12.20</div>
<div class="c" style="left:158.1px;top:160.2px;width:39.1px;height:15.7px;line-height:15.7px;text-align:right;padding-right:3px;"></div>
<div class="c" style="left:197.2px;top:160.2px;width:40.0px;height:15.7px;line-height:15.7px;text-align:right;padding-right:3px;"></div>
<div class="c" style="left:237.2px;top:160.2px;width:41.3px;height:15.7px;line-height:15.7px;text-align:right;padding-right:3px;"></div>
<div class="a" style="left:0;top:174px;width:278.5px;height:1px;background:rgba(255,255,255,0.22)"></div>
<div class="a" style="left:0;top:175px;width:278.5px;height:15px;background:#c8e4ea"></div>
<div class="c" style="left:0.0px;top:175.9px;width:39.5px;height:15.7px;line-height:15.7px;text-align:right;padding-right:3px;color:#2f8f2f;">1.295</div>
<div class="c" style="left:39.5px;top:175.9px;width:39.0px;height:15.7px;line-height:15.7px;text-align:right;padding-right:3px;">-9.61</div>
<div class="c" style="left:78.5px;top:175.9px;width:40.0px;height:15.7px;line-height:15.7px;text-align:right;padding-right:3px;">-0.24</div>
<div class="c" style="left:118.5px;top:175.9px;width:39.6px;height:15.7px;line-height:15.7px;text-align:right;padding-right:3px;">11.03</div>
<div class="c" style="left:158.1px;top:175.9px;width:39.1px;height:15.7px;line-height:15.7px;text-align:right;padding-right:3px;"></div>
<div class="c" style="left:197.2px;top:175.9px;width:40.0px;height:15.7px;line-height:15.7px;text-align:right;padding-right:3px;"></div>
<div class="c" style="left:237.2px;top:175.9px;width:41.3px;height:15.7px;line-height:15.7px;text-align:right;padding-right:3px;"></div>
<div class="a" style="left:0;top:189px;width:278.5px;height:1px;background:rgba(255,255,255,0.22)"></div>
<div class="a" style="left:39.0px;top:0;width:1px;height:179.8px;background:rgba(255,255,255,0.3)"></div>
<div class="a" style="left:39.0px;top:0;width:1px;height:17.4px;background:#dde3ec"></div>
<div class="a" style="left:78.0px;top:0;width:1px;height:179.8px;background:rgba(255,255,255,0.3)"></div>
<div class="a" style="left:78.0px;top:0;width:1px;height:17.4px;background:#dde3ec"></div>
<div class="a" style="left:118.0px;top:0;width:1px;height:179.8px;background:rgba(255,255,255,0.3)"></div>
<div class="a" style="left:118.0px;top:0;width:1px;height:17.4px;background:#dde3ec"></div>
<div class="a" style="left:157.6px;top:0;width:1px;height:179.8px;background:rgba(255,255,255,0.3)"></div>
<div class="a" style="left:157.6px;top:0;width:1px;height:17.4px;background:#dde3ec"></div>
<div class="a" style="left:196.7px;top:0;width:1px;height:179.8px;background:rgba(255,255,255,0.3)"></div>
<div class="a" style="left:196.7px;top:0;width:1px;height:17.4px;background:#dde3ec"></div>
<div class="a" style="left:236.7px;top:0;width:1px;height:179.8px;background:rgba(255,255,255,0.3)"></div>
<div class="a" style="left:236.7px;top:0;width:1px;height:17.4px;background:#dde3ec"></div>
<div class="a" style="left:278.0px;top:0;width:1px;height:179.8px;background:rgba(255,255,255,0.3)"></div>
<div class="a" style="left:278.0px;top:0;width:1px;height:17.4px;background:#dde3ec"></div>
<div class="a" style="left:278.5px;top:17.4px;width:14.3px;height:162.4px;background:#d7dde8"></div>
<div class="a" style="left:281.5px;top:93.8px;width:8.3px;height:15.0px;background:#a9b1bd"></div>
<svg class="a" style="left:282.6px;top:23.4px" width="6" height="4"><path d="M0 4L3 0L6 4Z" fill="#5d6573"/></svg>
<svg class="a" style="left:282.6px;top:169.8px" width="6" height="4"><path d="M0 0L3 4L6 0Z" fill="#5d6573"/></svg>
</div>
<div class="a" style="left:-5px;top:605px;width:106px;height:16px;background:#fff;border:1px solid #b3bccb"></div>
<div class="t" style="left:-2px;top:609px">bined</div>
<svg class="a" style="left:92px;top:612px" width="5" height="3"><path d="M0 0H5L2.5 3Z" fill="#444"/></svg>
<div class="a" style="left:109px;top:605px;width:67px;height:16px;background:#fff;border:1px solid #b3bccb"></div>
<div class="t" style="left:111px;top:609px">Auto</div>
<svg class="a" style="left:167px;top:612px" width="5" height="3"><path d="M0 0H5L2.5 3Z" fill="#444"/></svg>
<div class="a" style="left:427px;top:608px;width:10px;height:10px;background:#fff;border:1px solid #8f98a8"></div>
<div class="t" style="left:440px;top:608px;font-size:10.5px">Ignore Today's Trades</div>
<div class="a" style="left:-5px;top:624px;width:551.2px;height:51px;border:1px solid #b7c1d1;background:#fff"></div>
<div class="a" style="left:-4px;top:625px;width:549.2px;height:17px;background:#f6f8fc;border-bottom:1px solid #e1e6ee"></div>
<div class="c" style="left:-4.0px;top:625.0px;width:48.0px;height:17.0px;line-height:17.0px;text-align:center;">Cost</div>
<div class="c" style="left:44.0px;top:625.0px;width:50.0px;height:17.0px;line-height:17.0px;text-align:center;">Curr Cost</div>
<div class="c" style="left:94.0px;top:625.0px;width:49.4px;height:17.0px;line-height:17.0px;text-align:center;">Commi...</div>
<div class="c" style="left:143.4px;top:625.0px;width:48.6px;height:17.0px;line-height:17.0px;text-align:center;">PnL</div>
<div class="c" style="left:192.0px;top:625.0px;width:49.6px;height:17.0px;line-height:17.0px;text-align:center;">PnL%</div>
<div class="c" style="left:241.6px;top:625.0px;width:49.4px;height:17.0px;line-height:17.0px;text-align:center;">Delta</div>
<div class="c" style="left:291.0px;top:625.0px;width:49.4px;height:17.0px;line-height:17.0px;text-align:center;">Gamma</div>
<div class="c" style="left:340.4px;top:625.0px;width:49.1px;height:17.0px;line-height:17.0px;text-align:center;">Theta</div>
<div class="c" style="left:389.5px;top:625.0px;width:49.1px;height:17.0px;line-height:17.0px;text-align:center;">Vega</div>
<div class="c" style="left:438.6px;top:625.0px;width:49.4px;height:17.0px;line-height:17.0px;text-align:center;">T/D</div>
<div class="c" style="left:488.0px;top:625.0px;width:57.2px;height:17.0px;line-height:17.0px;text-align:center;">Plot</div>
<div class="c" style="left:-4.0px;top:643.5px;width:48.0px;height:15.7px;line-height:15.7px;text-align:right;padding-right:3px;">-565.30</div>
<div class="c" style="left:44.0px;top:643.5px;width:50.0px;height:15.7px;line-height:15.7px;text-align:right;padding-right:3px;">560.00</div>
<div class="c" style="left:94.0px;top:643.5px;width:49.4px;height:15.7px;line-height:15.7px;text-align:right;padding-right:3px;">2.80</div>
<div class="c" style="left:143.4px;top:643.5px;width:48.6px;height:15.7px;line-height:15.7px;text-align:right;padding-right:3px;color:#e8242a;">-5.30</div>
<div class="c" style="left:192.0px;top:643.5px;width:49.6px;height:15.7px;line-height:15.7px;text-align:right;padding-right:3px;color:#e8242a;">-0.94%</div>
<div class="c" style="left:241.6px;top:643.5px;width:49.4px;height:15.7px;line-height:15.7px;text-align:right;padding-right:3px;">0.24</div>
<div class="c" style="left:291.0px;top:643.5px;width:49.4px;height:15.7px;line-height:15.7px;text-align:right;padding-right:3px;">0.37</div>
<div class="a" style="left:340.4px;top:642px;width:49.1px;height:15px;background:#fe0000"></div>
<div class="c" style="left:340.4px;top:643.5px;width:49.1px;height:15.7px;line-height:15.7px;text-align:right;padding-right:3px;color:#6a0a0a;">-40.21</div>
<div class="c" style="left:389.5px;top:643.5px;width:49.1px;height:15.7px;line-height:15.7px;text-align:right;padding-right:3px;">3.25</div>
<div class="c" style="left:438.6px;top:643.5px;width:49.4px;height:15.7px;line-height:15.7px;text-align:right;padding-right:3px;">-167.5</div>
<div class="c" style="left:488.0px;top:643.5px;width:57.2px;height:15.7px;line-height:15.7px;text-align:center;"><svg width="9" height="9" style="vertical-align:middle"><rect x="0.5" y="0.5" width="8" height="8" fill="#fff" stroke="#9aa2ae"/><path d="M2 4.5L3.8 6.5L7 2" fill="none" stroke="#5a6270" stroke-width="1"/></svg></div>
<div class="a" style="left:-4px;top:656.7px;width:549.2px;height:1px;background:#e1e6ee"></div>
<div class="c" style="left:-4.0px;top:659.2px;width:48.0px;height:15.7px;line-height:15.7px;text-align:right;padding-right:3px;"></div>
<div class="c" style="left:44.0px;top:659.2px;width:50.0px;height:15.7px;line-height:15.7px;text-align:right;padding-right:3px;"></div>
<div class="c" style="left:94.0px;top:659.2px;width:49.4px;height:15.7px;line-height:15.7px;text-align:right;padding-right:3px;"></div>
<div class="c" style="left:143.4px;top:659.2px;width:48.6px;height:15.7px;line-height:15.7px;text-align:right;padding-right:3px;"></div>
<div class="c" style="left:192.0px;top:659.2px;width:49.6px;height:15.7px;line-height:15.7px;text-align:right;padding-right:3px;"></div>
<div class="c" style="left:241.6px;top:659.2px;width:49.4px;height:15.7px;line-height:15.7px;text-align:right;padding-right:3px;">0.00</div>
<div class="c" style="left:291.0px;top:659.2px;width:49.4px;height:15.7px;line-height:15.7px;text-align:right;padding-right:3px;">0.00</div>
<div class="c" style="left:340.4px;top:659.2px;width:49.1px;height:15.7px;line-height:15.7px;text-align:right;padding-right:3px;">0.00</div>
<div class="c" style="left:389.5px;top:659.2px;width:49.1px;height:15.7px;line-height:15.7px;text-align:right;padding-right:3px;">0.00</div>
<div class="c" style="left:438.6px;top:659.2px;width:49.4px;height:15.7px;line-height:15.7px;text-align:right;padding-right:3px;">0</div>
<div class="c" style="left:488.0px;top:659.2px;width:57.2px;height:15.7px;line-height:15.7px;text-align:center;"><svg width="9" height="9" style="vertical-align:middle"><rect x="0.5" y="0.5" width="8" height="8" fill="#fff" stroke="#9aa2ae"/><path d="M2 4.5L3.8 6.5L7 2" fill="none" stroke="#5a6270" stroke-width="1"/></svg></div>
<div class="a" style="left:-4px;top:672.4px;width:549.2px;height:1px;background:#e1e6ee"></div>
<div class="a" style="left:43.5px;top:625px;width:1px;height:50px;background:#e1e6ee"></div>
<div class="a" style="left:93.5px;top:625px;width:1px;height:50px;background:#e1e6ee"></div>
<div class="a" style="left:142.9px;top:625px;width:1px;height:50px;background:#e1e6ee"></div>
<div class="a" style="left:191.5px;top:625px;width:1px;height:50px;background:#e1e6ee"></div>
<div class="a" style="left:241.1px;top:625px;width:1px;height:50px;background:#e1e6ee"></div>
<div class="a" style="left:290.5px;top:625px;width:1px;height:50px;background:#e1e6ee"></div>
<div class="a" style="left:339.9px;top:625px;width:1px;height:50px;background:#e1e6ee"></div>
<div class="a" style="left:389.0px;top:625px;width:1px;height:50px;background:#e1e6ee"></div>
<div class="a" style="left:438.1px;top:625px;width:1px;height:50px;background:#e1e6ee"></div>
<div class="a" style="left:487.5px;top:625px;width:1px;height:50px;background:#e1e6ee"></div>
<div class="a" style="left:557px;top:138px;width:523px;height:537px;background:#d5dbe7"></div>
<div class="a" style="left:557px;top:161px;width:523px;height:1px;background:#b3bccb"></div>
<div class="a" style="left:557px;top:140px;width:63.5px;height:22px;background:#d5dbe7;border-right:1px solid #a9b3c3"></div>
<div class="t" style="left:566.4px;top:145px;font-size:10.2px">Risk Chart</div>
<div class="a" style="left:620.5px;top:140px;width:66.8px;height:21px;background:#ccd3df;border-right:1px solid #a9b3c3;border-bottom:1px solid #aeb7c6"></div>
<div class="t" style="left:630px;top:145px;font-size:10.2px">Price Chart</div>
<div class="a" style="left:687.3px;top:140px;width:105.0px;height:21px;background:#ccd3df;border-right:1px solid #a9b3c3;border-bottom:1px solid #aeb7c6"></div>
<div class="t" style="left:697px;top:145px;font-size:10.2px">Movement Analysis</div>
<div class="a" style="left:792.3px;top:140px;width:54.2px;height:21px;background:#ccd3df;border-right:1px solid #a9b3c3;border-bottom:1px solid #aeb7c6"></div>
<div class="t" style="left:801.9px;top:145px;font-size:10.2px">Volatility</div>
<div class="a" style="left:846.5px;top:140px;width:132.8px;height:21px;background:#ccd3df;border-right:1px solid #a9b3c3;border-bottom:1px solid #aeb7c6"></div>
<div class="t" style="left:856px;top:145px;font-size:10.2px">Statistics &amp; Fundamentals</div>
<div class="t" style="left:562px;top:168px;font-size:10px">Vol Adjust</div>
<div class="a" style="left:610px;top:164px;width:45px;height:17px;background:#fff;border:1px solid #b9c1cf"></div>
<div class="t" style="left:633px;top:168px;font-size:10.5px">0</div>
<svg class="a" style="left:645px;top:167px" width="6" height="11"><path d="M0.5 3.5L3 0.8L5.5 3.5Z" fill="#505866"/><path d="M0.5 7.5L3 10.2L5.5 7.5Z" fill="#505866"/></svg>
<div class="t" style="left:986px;top:168px;font-size:10px">Projection</div>
<div class="a" style="left:1033px;top:164px;width:60px;height:17px;background:#fff;border:1px solid #b9c1cf"></div>
<div class="t" style="left:1036px;top:168px;font-size:10.5px">29/04/2025</div>
<div class="a" style="left:557px;top:183px;width:523px;height:470px;background:#fff"></div>
<div class="a" style="left:557px;top:653px;width:523px;height:22px;background:#293754"></div>
<div class="t" style="left:1040px;top:659px;color:#fff;font-size:10.5px">100%</div>
<div class="a" style="left:1073px;top:663px;width:6px;height:1px;background:#fff"></div>
<svg class="a" style="left:0;top:0" width="1080" height="675" font-family="Liberation Sans">
<defs><clipPath id="pc"><rect x="604" y="198" width="476" height="277"/></clipPath></defs>
<rect x="796.8" y="198.5" width="157.1" height="275.7" fill="#92cbdb"/>
<rect x="836.0" y="198.5" width="78.6" height="275.7" fill="#4b80c0"/>
<line x1="601" y1="198.5" x2="1080" y2="198.5" stroke="#e3e3e8" stroke-width="1" opacity="0.85"/>
<line x1="601" y1="214.7" x2="1080" y2="214.7" stroke="#e3e3e8" stroke-width="1" opacity="0.85"/>
<line x1="601" y1="230.9" x2="1080" y2="230.9" stroke="#e3e3e8" stroke-width="1" opacity="0.85"/>
<line x1="601" y1="247.2" x2="1080" y2="247.2" stroke="#e3e3e8" stroke-width="1" opacity="0.85"/>
<line x1="601" y1="263.4" x2="1080" y2="263.4" stroke="#e3e3e8" stroke-width="1" opacity="0.85"/>
<line x1="601" y1="279.6" x2="1080" y2="279.6" stroke="#e3e3e8" stroke-width="1" opacity="0.85"/>
<line x1="601" y1="295.8" x2="1080" y2="295.8" stroke="#e3e3e8" stroke-width="1" opacity="0.85"/>
<line x1="601" y1="312.0" x2="1080" y2="312.0" stroke="#e3e3e8" stroke-width="1" opacity="0.85"/>
<line x1="601" y1="328.3" x2="1080" y2="328.3" stroke="#e3e3e8" stroke-width="1" opacity="0.85"/>
<line x1="601" y1="344.5" x2="1080" y2="344.5" stroke="#e3e3e8" stroke-width="1" opacity="0.85"/>
<line x1="601" y1="360.7" x2="1080" y2="360.7" stroke="#e3e3e8" stroke-width="1" opacity="0.85"/>
<line x1="601" y1="376.9" x2="1080" y2="376.9" stroke="#e3e3e8" stroke-width="1" opacity="0.85"/>
<line x1="601" y1="393.1" x2="1080" y2="393.1" stroke="#e3e3e8" stroke-width="1" opacity="0.85"/>
<line x1="601" y1="409.4" x2="1080" y2="409.4" stroke="#e3e3e8" stroke-width="1" opacity="0.85"/>
<line x1="601" y1="425.6" x2="1080" y2="425.6" stroke="#e3e3e8" stroke-width="1" opacity="0.85"/>
<line x1="601" y1="441.8" x2="1080" y2="441.8" stroke="#e3e3e8" stroke-width="1" opacity="0.85"/>
<line x1="601" y1="458.0" x2="1080" y2="458.0" stroke="#e3e3e8" stroke-width="1" opacity="0.85"/>
<line x1="601" y1="474.2" x2="1080" y2="474.2" stroke="#e3e3e8" stroke-width="1" opacity="0.85"/>
<line x1="639.4" y1="192.5" x2="639.4" y2="474.24" stroke="#e3e3e8" stroke-width="1" opacity="0.85"/>
<line x1="685.5" y1="192.5" x2="685.5" y2="474.24" stroke="#e3e3e8" stroke-width="1" opacity="0.85"/>
<line x1="731.6" y1="192.5" x2="731.6" y2="474.24" stroke="#e3e3e8" stroke-width="1" opacity="0.85"/>
<line x1="777.7" y1="192.5" x2="777.7" y2="474.24" stroke="#e3e3e8" stroke-width="1" opacity="0.85"/>
<line x1="823.8" y1="192.5" x2="823.8" y2="474.24" stroke="#e3e3e8" stroke-width="1" opacity="0.85"/>
<line x1="869.9" y1="192.5" x2="869.9" y2="474.24" stroke="#e3e3e8" stroke-width="1" opacity="0.85"/>
<line x1="916.1" y1="192.5" x2="916.1" y2="474.24" stroke="#e3e3e8" stroke-width="1" opacity="0.85"/>
<line x1="962.2" y1="192.5" x2="962.2" y2="474.24" stroke="#e3e3e8" stroke-width="1" opacity="0.85"/>
<line x1="1008.3" y1="192.5" x2="1008.3" y2="474.24" stroke="#e3e3e8" stroke-width="1" opacity="0.85"/>
<line x1="1054.4" y1="192.5" x2="1054.4" y2="474.24" stroke="#e3e3e8" stroke-width="1" opacity="0.85"/>
<line x1="604" y1="198.5" x2="604" y2="474.24" stroke="#e3e3e8"/>
<text x="598" y="202.1" font-size="8.8" text-anchor="end" fill="#333">44%</text>
<text x="598" y="218.3" font-size="8.8" text-anchor="end" fill="#333">35%</text>
<text x="598" y="234.5" font-size="8.8" text-anchor="end" fill="#333">27%</text>
<text x="598" y="250.8" font-size="8.8" text-anchor="end" fill="#333">18%</text>
<text x="598" y="267.0" font-size="8.8" text-anchor="end" fill="#333">9%</text>
<rect x="562" y="275.3" width="38.4" height="10.4" fill="#d20000"/>
<text x="598" y="283.2" font-size="8.8" text-anchor="end" fill="#fff">-1%</text>
<text x="598" y="299.4" font-size="8.8" text-anchor="end" fill="#333">-9%</text>
<text x="598" y="315.6" font-size="8.8" text-anchor="end" fill="#333">-18%</text>
<text x="598" y="331.9" font-size="8.8" text-anchor="end" fill="#333">-27%</text>
<text x="598" y="348.1" font-size="8.8" text-anchor="end" fill="#333">-35%</text>
<text x="598" y="364.3" font-size="8.8" text-anchor="end" fill="#333">-44%</text>
<text x="598" y="380.5" font-size="8.8" text-anchor="end" fill="#333">-53%</text>
<text x="598" y="396.7" font-size="8.8" text-anchor="end" fill="#333">-62%</text>
<text x="598" y="413.0" font-size="8.8" text-anchor="end" fill="#333">-71%</text>
<text x="598" y="429.2" font-size="8.8" text-anchor="end" fill="#333">-80%</text>
<text x="598" y="445.4" font-size="8.8" text-anchor="end" fill="#333">-88%</text>
<text x="598" y="461.6" font-size="8.8" text-anchor="end" fill="#333">-97%</text>
<text x="598" y="477.8" font-size="8.8" text-anchor="end" fill="#333">-106%</text>
<text x="639.4" y="194.5" font-size="8.8" text-anchor="middle" fill="#333">-13.1%</text>
<text x="685.5" y="194.5" font-size="8.8" text-anchor="middle" fill="#333">-10.5%</text>
<text x="731.6" y="194.5" font-size="8.8" text-anchor="middle" fill="#333">-8.0%</text>
<text x="777.7" y="194.5" font-size="8.8" text-anchor="middle" fill="#333">-5.4%</text>
<text x="823.8" y="194.5" font-size="8.8" text-anchor="middle" fill="#333">-2.9%</text>
<text x="863.9" y="194.5" font-size="8.8" text-anchor="middle" fill="#222">-</text>
<text x="916.1" y="194.5" font-size="8.8" text-anchor="middle" fill="#333">2.3%</text>
<text x="962.2" y="194.5" font-size="8.8" text-anchor="middle" fill="#333">4.8%</text>
<text x="1008.3" y="194.5" font-size="8.8" text-anchor="middle" fill="#333">7.4%</text>
<text x="1054.4" y="194.5" font-size="8.8" text-anchor="middle" fill="#333">9.9%</text>
<rect x="862.4" y="183.7" width="25" height="10" fill="#fff" stroke="#7f8896" stroke-width="0.8"/>
<text x="875" y="192.5" font-size="8.8" text-anchor="middle" fill="#222">0.0%</text>
<text x="639.4" y="486.3" font-size="8.8" text-anchor="middle" fill="#333">340</text>
<text x="685.5" y="486.3" font-size="8.8" text-anchor="middle" fill="#333">350</text>
<text x="731.6" y="486.3" font-size="8.8" text-anchor="middle" fill="#333">360</text>
<text x="777.7" y="486.3" font-size="8.8" text-anchor="middle" fill="#333">370</text>
<text x="823.8" y="486.3" font-size="8.8" text-anchor="middle" fill="#333">380</text>
<text x="916.1" y="486.3" font-size="8.8" text-anchor="middle" fill="#333">400</text>
<text x="962.2" y="486.3" font-size="8.8" text-anchor="middle" fill="#333">410</text>
<text x="1008.3" y="486.3" font-size="8.8" text-anchor="middle" fill="#333">420</text>
<text x="1054.4" y="486.3" font-size="8.8" text-anchor="middle" fill="#333">430</text>
<text transform="translate(806.0 229) rotate(-90)" font-size="8.8" fill="#5d98cc">374.13</text>
<text transform="translate(845.5 229) rotate(-90)" font-size="8.8" fill="#a6c6e8">382.64</text>
<text transform="translate(911.5 229) rotate(-90)" font-size="8.8" fill="#a6c6e8">399.68</text>
<text transform="translate(953.0 229) rotate(-90)" font-size="8.8" fill="#5d98cc">408.19</text>
<line x1="809.8" y1="198.5" x2="809.8" y2="474.24" stroke="#8a2aa0" stroke-width="1" stroke-dasharray="3 2"/>
<line x1="906.9" y1="198.5" x2="906.9" y2="474.24" stroke="#8a2aa0" stroke-width="1" stroke-dasharray="3 2"/>
<text transform="translate(807.8 472.5) rotate(-90)" font-size="8.8" fill="#8a2aa0">376.95</text>
<text transform="translate(904.6 472.5) rotate(-90)" font-size="8.8" fill="#8a2aa0">398.01</text>
<text x="695" y="467" font-size="8.8" fill="#8a2aa0">14.9%</text>
<text x="845.5" y="467" font-size="8.8" fill="#8a2aa0">54.3%</text>
<text x="1012.5" y="467" font-size="8.8" fill="#8a2aa0">30.9%</text>
<line x1="604" y1="280.3" x2="1080" y2="280.3" stroke="#6a6a6a" stroke-width="1.6"/>
<g clip-path="url(#pc)">
<path d="M604.0 219.6 C611.7 220.0 634.0 220.1 650.0 222.0 C666.0 223.9 685.0 227.3 700.0 231.0 C715.0 234.7 728.9 240.5 740.0 244.4 C751.1 248.3 755.6 250.1 766.7 254.4 C777.8 258.7 794.5 265.9 806.7 270.0 C818.9 274.1 831.9 277.2 840.0 278.9 C848.1 280.6 849.8 280.1 855.6 280.4 C861.4 280.7 868.3 280.7 875.0 280.6 C881.7 280.5 888.5 281.0 895.6 280.0 C902.7 279.0 908.5 276.8 917.8 274.4 C927.0 272.0 940.7 268.6 951.1 265.6 C961.5 262.7 971.4 259.6 980.0 256.7 C988.6 253.8 992.9 251.4 1003.0 248.3 C1013.1 245.2 1027.7 241.1 1040.5 238.0 C1053.3 234.9 1073.4 231.3 1080.0 230.0" fill="none" stroke="#8ab4f0" stroke-width="1"/>
<path d="M604 219.6 C 660 224, 720 236, 764 253" fill="none" stroke="#7cc47c" stroke-width="1"/>
<path d="M997.0 250.5 C998.0 250.1 995.8 250.4 1003.0 248.3 C1010.2 246.2 1027.7 241.1 1040.5 238.0 C1053.3 234.9 1073.4 231.3 1080.0 230.0" fill="none" stroke="#6cb86c" stroke-width="1"/>
<path d="M604.0 219.6 C611.7 219.6 636.3 219.6 650.0 219.6 C663.7 219.6 675.8 219.2 686.0 219.4 C696.2 219.6 701.6 217.4 711.0 220.7 C720.4 223.9 732.9 233.3 742.2 238.9 C751.5 244.5 759.7 249.0 766.7 254.4 C773.7 259.8 779.2 265.7 784.4 271.1 C789.6 276.5 793.7 281.7 797.8 286.7 C801.9 291.7 804.5 296.3 808.9 301.1 C813.3 305.9 819.2 311.3 824.4 315.6 C829.6 319.9 834.1 323.9 840.0 326.7 C845.9 329.5 853.0 332.2 860.0 332.2 C867.0 332.2 875.2 330.0 882.2 326.7 C889.2 323.4 896.3 316.6 902.2 312.2 C908.1 307.8 912.2 305.4 917.8 300.0 C923.4 294.6 929.7 286.0 935.6 280.0 C941.5 274.0 946.8 268.8 953.0 264.0 C959.2 259.2 966.2 255.0 972.6 251.1 C979.0 247.2 984.9 243.7 991.1 240.5 C997.3 237.3 1003.5 234.1 1009.6 231.7 C1015.8 229.3 1021.8 227.6 1028.0 226.1 C1034.2 224.6 1038.0 223.8 1046.7 222.8 C1055.4 221.8 1074.5 220.5 1080.0 220.0" fill="none" stroke="#e86a6a" stroke-width="1.1"/>
<path d="M604 219.6 L800.5 219.6 L835.8 462.2 L881.4 462.2 L915.6 219.6 L1080 219.6" fill="none" stroke="#3434c4" stroke-width="1.6"/>
</g>
<rect x="854.4" y="277.3" width="27.8" height="6.7" fill="#d8a888" opacity="0.75"/>
<circle cx="874.9" cy="281.1" r="3" fill="#ee0000" stroke="#700" stroke-width="0.6"/>
<rect x="608.4" y="203.6" width="143.9" height="70" rx="4" fill="#e7ecf3" fill-opacity="0.88" stroke="#9aa6b8" stroke-width="0.8"/>
<rect x="614.5" y="209.6" width="2.4" height="10" fill="#e02020"/>
<text x="617.5" y="218.7" font-size="8.8" fill="#555" text-anchor="start">-2.80 Realized PnL</text>
<rect x="614.5" y="221.5" width="2.4" height="10" fill="#7a8cf0"/>
<text x="617.5" y="230.6" font-size="8.8" fill="#555" text-anchor="start">+1</text>
<text x="630.6" y="230.6" font-size="8.8" fill="#5a5ae8" text-anchor="start">02may. 392.5 Call Δ</text>
<text x="745.2" y="230.6" font-size="8.8" fill="#5a5ae8" text-anchor="end">49.47</text>
<rect x="614.5" y="233.3" width="2.4" height="10" fill="#7a8cf0"/>
<text x="617.5" y="242.4" font-size="8.8" fill="#555" text-anchor="start">+1</text>
<text x="630.6" y="242.4" font-size="8.8" fill="#5a5ae8" text-anchor="start">02may. 382.5 Put Δ</text>
<text x="744" y="242.4" font-size="8.8" fill="#5a5ae8" text-anchor="end">-32.61</text>
<rect x="614.5" y="244.9" width="2.4" height="10" fill="#7a8cf0"/>
<text x="617.5" y="254.0" font-size="8.8" fill="#555" text-anchor="start">-1</text>
<text x="627.6" y="254.0" font-size="8.8" fill="#e85a5a" text-anchor="start">02may. 400 Call Δ</text>
<text x="735" y="254.0" font-size="8.8" fill="#e85a5a" text-anchor="end">37.61</text>
<rect x="614.5" y="256.2" width="2.4" height="10" fill="#7a8cf0"/>
<text x="617.5" y="265.3" font-size="8.8" fill="#555" text-anchor="start">-1</text>
<text x="627.6" y="265.3" font-size="8.8" fill="#e85a5a" text-anchor="start">02may. 375 Put Δ</text>
<text x="734" y="265.3" font-size="8.8" fill="#e85a5a" text-anchor="end">-20.99</text>
<rect x="608.6" y="423.6" width="86.6" height="46.4" rx="4" fill="#e7ecf3" fill-opacity="0.9" stroke="#9aa6b8" stroke-width="0.8"/>
<text x="614.7" y="439.4" font-size="8.8" fill="#7a7ae8">02/05/2025 (0)</text>
<text x="614.7" y="450.9" font-size="8.8" fill="#e86060">01/05/2025 (1) T+2</text>
<text x="614.7" y="462.1" font-size="8.8" fill="#a0bcf0">29/04/2025 (3) T+0</text>
<rect x="1040" y="203" width="60" height="36" rx="4" fill="#e7ecf3" fill-opacity="0.9" stroke="#9aa6b8" stroke-width="0.8"/>
<line x1="1040" y1="221" x2="1080" y2="221" stroke="#c5ccd8" stroke-width="0.8"/>
<text x="1048" y="216.5" font-size="8.8" fill="#555">Comments</text>
<text x="1048" y="233" font-size="8.8" fill="#555">Trade Opened</text>
</svg>
<svg class="a" style="left:0;top:0" width="1080" height="675" font-family="Liberation Sans">
<rect x="560.2" y="492.1" width="560" height="158.4" rx="5" fill="#e8eef6" stroke="#9ca7b8" stroke-width="1.3"/>
<text x="583" y="520.2" font-size="8.8" text-anchor="middle" fill="#5a5f6a">PnL</text>
<text x="583" y="556.3" font-size="8.8" text-anchor="middle" fill="#5a5f6a">Delta</text>
<text x="583" y="583.8" font-size="8.8" text-anchor="middle" fill="#5a5f6a">Gamma</text>
<text x="583" y="610.7" font-size="8.8" text-anchor="middle" fill="#5a5f6a">Theta</text>
<text x="583" y="638.7" font-size="8.8" text-anchor="middle" fill="#5a5f6a">Vega</text>
<rect x="604.8" y="506.9" width="57.7" height="8.9" fill="#5b78f2" stroke="#4a4e78" stroke-width="0.8"/>
<text x="639.4" y="524.8" font-size="8.8" text-anchor="middle" fill="#6a74ee">176</text>
<text x="639.4" y="532.8" font-size="8.8" text-anchor="middle" fill="#6a74ee">31%</text>
<rect x="662.4" y="508.3" width="46.2" height="7.5" fill="#5b78f2" stroke="#4a4e78" stroke-width="0.8"/>
<text x="685.5" y="524.8" font-size="8.8" text-anchor="middle" fill="#6a74ee">156</text>
<text x="685.5" y="532.8" font-size="8.8" text-anchor="middle" fill="#6a74ee">28%</text>
<rect x="708.5" y="510.2" width="46.2" height="5.6" fill="#5b78f2" stroke="#4a4e78" stroke-width="0.8"/>
<text x="731.6" y="524.8" font-size="8.8" text-anchor="middle" fill="#6a74ee">116</text>
<text x="731.6" y="532.8" font-size="8.8" text-anchor="middle" fill="#6a74ee">21%</text>
<rect x="754.6" y="512.4" width="46.2" height="3.4" fill="#5b78f2" stroke="#4a4e78" stroke-width="0.8"/>
<text x="777.7" y="524.8" font-size="8.8" text-anchor="middle" fill="#6a74ee">63</text>
<text x="777.7" y="532.8" font-size="8.8" text-anchor="middle" fill="#6a74ee">11%</text>
<rect x="800.7" y="515.0" width="46.2" height="0.8" fill="#5b78f2" stroke="#4a4e78" stroke-width="0.8"/>
<text x="823.8" y="524.8" font-size="8.8" text-anchor="middle" fill="#6a74ee">15</text>
<text x="823.8" y="532.8" font-size="8.8" text-anchor="middle" fill="#6a74ee">3%</text>
<rect x="893.0" y="515.2" width="46.2" height="0.6" fill="#5b78f2" stroke="#4a4e78" stroke-width="0.8"/>
<text x="916.1" y="524.8" font-size="8.8" text-anchor="middle" fill="#6a74ee">10</text>
<text x="916.1" y="532.8" font-size="8.8" text-anchor="middle" fill="#6a74ee">2%</text>
<rect x="939.1" y="513.5" width="46.2" height="2.3" fill="#5b78f2" stroke="#4a4e78" stroke-width="0.8"/>
<text x="962.2" y="524.8" font-size="8.8" text-anchor="middle" fill="#6a74ee">50</text>
<text x="962.2" y="532.8" font-size="8.8" text-anchor="middle" fill="#6a74ee">9%</text>
<rect x="985.2" y="511.3" width="46.2" height="4.5" fill="#5b78f2" stroke="#4a4e78" stroke-width="0.8"/>
<text x="1008.3" y="524.8" font-size="8.8" text-anchor="middle" fill="#6a74ee">96</text>
<text x="1008.3" y="532.8" font-size="8.8" text-anchor="middle" fill="#6a74ee">17%</text>
<rect x="1031.3" y="509.3" width="46.2" height="6.5" fill="#5b78f2" stroke="#4a4e78" stroke-width="0.8"/>
<text x="1054.4" y="524.8" font-size="8.8" text-anchor="middle" fill="#6a74ee">134</text>
<text x="1054.4" y="532.8" font-size="8.8" text-anchor="middle" fill="#6a74ee">24%</text>
<rect x="1077.4" y="507.8" width="46.2" height="8.0" fill="#5b78f2" stroke="#4a4e78" stroke-width="0.8"/>
<text x="1100.5" y="524.8" font-size="8.8" text-anchor="middle" fill="#6a74ee"></text>
<text x="1100.5" y="532.8" font-size="8.8" text-anchor="middle" fill="#6a74ee"></text>
<rect x="604.8" y="552.3" width="57.7" height="2.0" fill="#f27878" stroke="#7a5a5a" stroke-width="0.8"/>
<text x="639.4" y="551.5" font-size="8.8" text-anchor="middle" fill="#ee6a6a">-1.21</text>
<rect x="662.4" y="552.3" width="46.2" height="4.4" fill="#f27878" stroke="#7a5a5a" stroke-width="0.8"/>
<text x="685.5" y="551.5" font-size="8.8" text-anchor="middle" fill="#ee6a6a">-2.93</text>
<rect x="708.5" y="552.3" width="46.2" height="7.5" fill="#f27878" stroke="#7a5a5a" stroke-width="0.8"/>
<text x="731.6" y="551.5" font-size="8.8" text-anchor="middle" fill="#ee6a6a">-4.88</text>
<rect x="754.6" y="552.3" width="46.2" height="9.0" fill="#f27878" stroke="#7a5a5a" stroke-width="0.8"/>
<text x="777.7" y="551.5" font-size="8.8" text-anchor="middle" fill="#ee6a6a">-5.49</text>
<rect x="800.7" y="552.3" width="46.2" height="6.3" fill="#f27878" stroke="#7a5a5a" stroke-width="0.8"/>
<text x="823.8" y="551.5" font-size="8.8" text-anchor="middle" fill="#ee6a6a">-3.69</text>
<rect x="893.0" y="546.6" width="46.2" height="5.7" fill="#5b78f2" stroke="#4a4e78" stroke-width="0.8"/>
<text x="916.1" y="561.3" font-size="8.8" text-anchor="middle" fill="#6a74ee">3.06</text>
<rect x="939.1" y="543.5" width="46.2" height="8.8" fill="#5b78f2" stroke="#4a4e78" stroke-width="0.8"/>
<text x="962.2" y="561.3" font-size="8.8" text-anchor="middle" fill="#6a74ee">4.58</text>
<rect x="985.2" y="543.9" width="46.2" height="8.4" fill="#5b78f2" stroke="#4a4e78" stroke-width="0.8"/>
<text x="1008.3" y="561.3" font-size="8.8" text-anchor="middle" fill="#6a74ee">4.34</text>
<rect x="1031.3" y="546.4" width="46.2" height="5.9" fill="#5b78f2" stroke="#4a4e78" stroke-width="0.8"/>
<text x="1054.4" y="561.3" font-size="8.8" text-anchor="middle" fill="#6a74ee">3.17</text>
<rect x="1077.4" y="548.3" width="46.2" height="4.0" fill="#5b78f2" stroke="#4a4e78" stroke-width="0.8"/>
<rect x="604.8" y="578.8" width="57.7" height="3.0" fill="#f27878" stroke="#7a5a5a" stroke-width="0.8"/>
<text x="639.4" y="578.0" font-size="8.8" text-anchor="middle" fill="#ee6a6a">-0.13</text>
<rect x="662.4" y="578.8" width="46.2" height="5.0" fill="#f27878" stroke="#7a5a5a" stroke-width="0.8"/>
<text x="685.5" y="578.0" font-size="8.8" text-anchor="middle" fill="#ee6a6a">-0.20</text>
<rect x="708.5" y="578.8" width="46.2" height="3.8" fill="#f27878" stroke="#7a5a5a" stroke-width="0.8"/>
<text x="731.6" y="578.0" font-size="8.8" text-anchor="middle" fill="#ee6a6a">-0.16</text>
<rect x="754.6" y="577.3" width="46.2" height="1.5" fill="#5b78f2" stroke="#4a4e78" stroke-width="0.8"/>
<text x="777.7" y="587.8" font-size="8.8" text-anchor="middle" fill="#6a74ee">0.05</text>
<rect x="800.7" y="572.5" width="46.2" height="6.3" fill="#5b78f2" stroke="#4a4e78" stroke-width="0.8"/>
<text x="823.8" y="587.8" font-size="8.8" text-anchor="middle" fill="#6a74ee">0.29</text>
<rect x="893.0" y="572.5" width="46.2" height="6.3" fill="#5b78f2" stroke="#4a4e78" stroke-width="0.8"/>
<text x="916.1" y="587.8" font-size="8.8" text-anchor="middle" fill="#6a74ee">0.25</text>
<rect x="939.1" y="577.6" width="46.2" height="1.2" fill="#5b78f2" stroke="#4a4e78" stroke-width="0.8"/>
<text x="962.2" y="587.8" font-size="8.8" text-anchor="middle" fill="#6a74ee">0.05</text>
<rect x="985.2" y="578.8" width="46.2" height="2.0" fill="#f27878" stroke="#7a5a5a" stroke-width="0.8"/>
<text x="1008.3" y="578.0" font-size="8.8" text-anchor="middle" fill="#ee6a6a">-0.09</text>
<rect x="1031.3" y="578.8" width="46.2" height="2.8" fill="#f27878" stroke="#7a5a5a" stroke-width="0.8"/>
<text x="1054.4" y="578.0" font-size="8.8" text-anchor="middle" fill="#ee6a6a">-0.13</text>
<rect x="1077.4" y="578.8" width="46.2" height="3.0" fill="#f27878" stroke="#7a5a5a" stroke-width="0.8"/>
<rect x="604.8" y="605.7" width="57.7" height="0.8" fill="#5b78f2" stroke="#4a4e78" stroke-width="0.8"/>
<text x="639.4" y="615.3" font-size="8.8" text-anchor="middle" fill="#6a74ee">4.16</text>
<rect x="662.4" y="605.1" width="46.2" height="1.2" fill="#5b78f2" stroke="#4a4e78" stroke-width="0.8"/>
<text x="685.5" y="615.3" font-size="8.8" text-anchor="middle" fill="#6a74ee">5.55</text>
<rect x="708.5" y="606.3" width="46.2" height="0.6" fill="#f27878" stroke="#7a5a5a" stroke-width="0.8"/>
<text x="731.6" y="605.5" font-size="8.8" text-anchor="middle" fill="#ee6a6a">-0.92</text>
<rect x="754.6" y="606.3" width="46.2" height="4.5" fill="#f27878" stroke="#7a5a5a" stroke-width="0.8"/>
<text x="777.7" y="605.5" font-size="8.8" text-anchor="middle" fill="#ee6a6a">-17.80</text>
<rect x="800.7" y="606.3" width="46.2" height="8.1" fill="#f27878" stroke="#7a5a5a" stroke-width="0.8"/>
<text x="823.8" y="605.5" font-size="8.8" text-anchor="middle" fill="#ee6a6a">-35.82</text>
<rect x="893.0" y="606.3" width="46.2" height="6.5" fill="#f27878" stroke="#7a5a5a" stroke-width="0.8"/>
<text x="916.1" y="605.5" font-size="8.8" text-anchor="middle" fill="#ee6a6a">-28.82</text>
<rect x="939.1" y="606.3" width="46.2" height="2.0" fill="#f27878" stroke="#7a5a5a" stroke-width="0.8"/>
<text x="962.2" y="605.5" font-size="8.8" text-anchor="middle" fill="#ee6a6a">-9.17</text>
<rect x="985.2" y="604.3" width="46.2" height="2.0" fill="#5b78f2" stroke="#4a4e78" stroke-width="0.8"/>
<text x="1008.3" y="615.3" font-size="8.8" text-anchor="middle" fill="#6a74ee">6.21</text>
<rect x="1031.3" y="603.3" width="46.2" height="3.0" fill="#5b78f2" stroke="#4a4e78" stroke-width="0.8"/>
<text x="1054.4" y="615.3" font-size="8.8" text-anchor="middle" fill="#6a74ee">12.41</text>
<rect x="1077.4" y="602.3" width="46.2" height="4.0" fill="#5b78f2" stroke="#4a4e78" stroke-width="0.8"/>
<rect x="604.8" y="634.6" width="57.7" height="1.2" fill="#f27878" stroke="#7a5a5a" stroke-width="0.8"/>
<text x="639.4" y="633.8" font-size="8.8" text-anchor="middle" fill="#ee6a6a">-0.60</text>
<rect x="662.4" y="634.6" width="46.2" height="2.4" fill="#f27878" stroke="#7a5a5a" stroke-width="0.8"/>
<text x="685.5" y="633.8" font-size="8.8" text-anchor="middle" fill="#ee6a6a">-0.93</text>
<rect x="708.5" y="634.6" width="46.2" height="1.2" fill="#f27878" stroke="#7a5a5a" stroke-width="0.8"/>
<text x="731.6" y="633.8" font-size="8.8" text-anchor="middle" fill="#ee6a6a">-0.52</text>
<rect x="754.6" y="631.6" width="46.2" height="3.0" fill="#5b78f2" stroke="#4a4e78" stroke-width="0.8"/>
<text x="777.7" y="643.6" font-size="8.8" text-anchor="middle" fill="#6a74ee">0.96</text>
<rect x="800.7" y="627.4" width="46.2" height="7.2" fill="#5b78f2" stroke="#4a4e78" stroke-width="0.8"/>
<text x="823.8" y="643.6" font-size="8.8" text-anchor="middle" fill="#6a74ee">2.69</text>
<rect x="893.0" y="627.4" width="46.2" height="7.2" fill="#5b78f2" stroke="#4a4e78" stroke-width="0.8"/>
<text x="916.1" y="643.6" font-size="8.8" text-anchor="middle" fill="#6a74ee">2.31</text>
<rect x="939.1" y="632.6" width="46.2" height="2.0" fill="#5b78f2" stroke="#4a4e78" stroke-width="0.8"/>
<text x="962.2" y="643.6" font-size="8.8" text-anchor="middle" fill="#6a74ee">0.59</text>
<rect x="985.2" y="634.6" width="46.2" height="2.4" fill="#f27878" stroke="#7a5a5a" stroke-width="0.8"/>
<text x="1008.3" y="633.8" font-size="8.8" text-anchor="middle" fill="#ee6a6a">-0.75</text>
<rect x="1031.3" y="634.6" width="46.2" height="3.4" fill="#f27878" stroke="#7a5a5a" stroke-width="0.8"/>
<text x="1054.4" y="633.8" font-size="8.8" text-anchor="middle" fill="#ee6a6a">-1.26</text>
<rect x="1077.4" y="634.6" width="46.2" height="3.0" fill="#f27878" stroke="#7a5a5a" stroke-width="0.8"/>
<rect x="846.9" y="572.5" width="8" height="6.3" fill="#5b78f2" stroke="#4a4e78" stroke-width="0.8"/>
<rect x="846.9" y="606.3" width="8" height="8.1" fill="#f27878" stroke="#7a5a5a" stroke-width="0.8"/>
<rect x="846.9" y="627.4" width="8" height="7.2" fill="#5b78f2" stroke="#4a4e78" stroke-width="0.8"/>
<rect x="853.5" y="478.5" width="42" height="170.4" rx="4" fill="#edf1f7" fill-opacity="0.85" stroke="#7f8a9a" stroke-width="0.9"/>
<line x1="853.5" y1="492.5" x2="895.5" y2="492.5" stroke="#a9b5c6" stroke-width="0.8"/>
<rect x="854" y="571.5" width="39" height="15" fill="#d9e3f2" opacity="0.8"/>
<rect x="854" y="598.5" width="39" height="15" fill="#d9e3f2" opacity="0.8"/>
<rect x="854" y="626" width="39" height="15" fill="#d9e3f2" opacity="0.8"/>
<text x="874.5" y="516" font-size="8.8" text-anchor="middle" fill="#f0a0a0" opacity="0.45">-5</text>
<text x="874.5" y="549" font-size="8.8" text-anchor="middle" fill="#f0b0b0" opacity="0.45">-0.13</text>
<text x="874.5" y="590" font-size="8.8" text-anchor="middle" fill="#b0b8f0" opacity="0.45">0.37</text>
<text x="874.5" y="603" font-size="8.8" text-anchor="middle" fill="#f0b0b0" opacity="0.45">-12.57</text>
<text x="874.5" y="644" font-size="8.8" text-anchor="middle" fill="#b0b8f0" opacity="0.45">3.25</text>
<text x="874.5" y="487.5" font-size="8.8" text-anchor="middle" fill="#222">391.16</text>
<text x="874.5" y="505" font-size="8.8" text-anchor="middle" fill="#f0b0b0" opacity="0.6">-1%</text>
<text x="874.5" y="515.9" font-size="8.8" text-anchor="middle" fill="#e82020">-5</text>
<text x="874.5" y="529.1" font-size="8.8" text-anchor="middle" fill="#e82020">-0.9%</text>
<text x="874.5" y="556.1" font-size="8.8" text-anchor="middle" fill="#2020d8">0.24</text>
<text x="874.5" y="583.5" font-size="8.8" text-anchor="middle" fill="#2020d8">0.37</text>
<text x="874.5" y="611.6" font-size="8.8" text-anchor="middle" fill="#e82020">-40.21</text>
<text x="874.5" y="638.4" font-size="8.8" text-anchor="middle" fill="#2020d8">3.25</text>
</svg>
<div class="a" style="left:0;top:674px;width:1080px;height:1px;background:#a3abba"></div>
</body></html>
